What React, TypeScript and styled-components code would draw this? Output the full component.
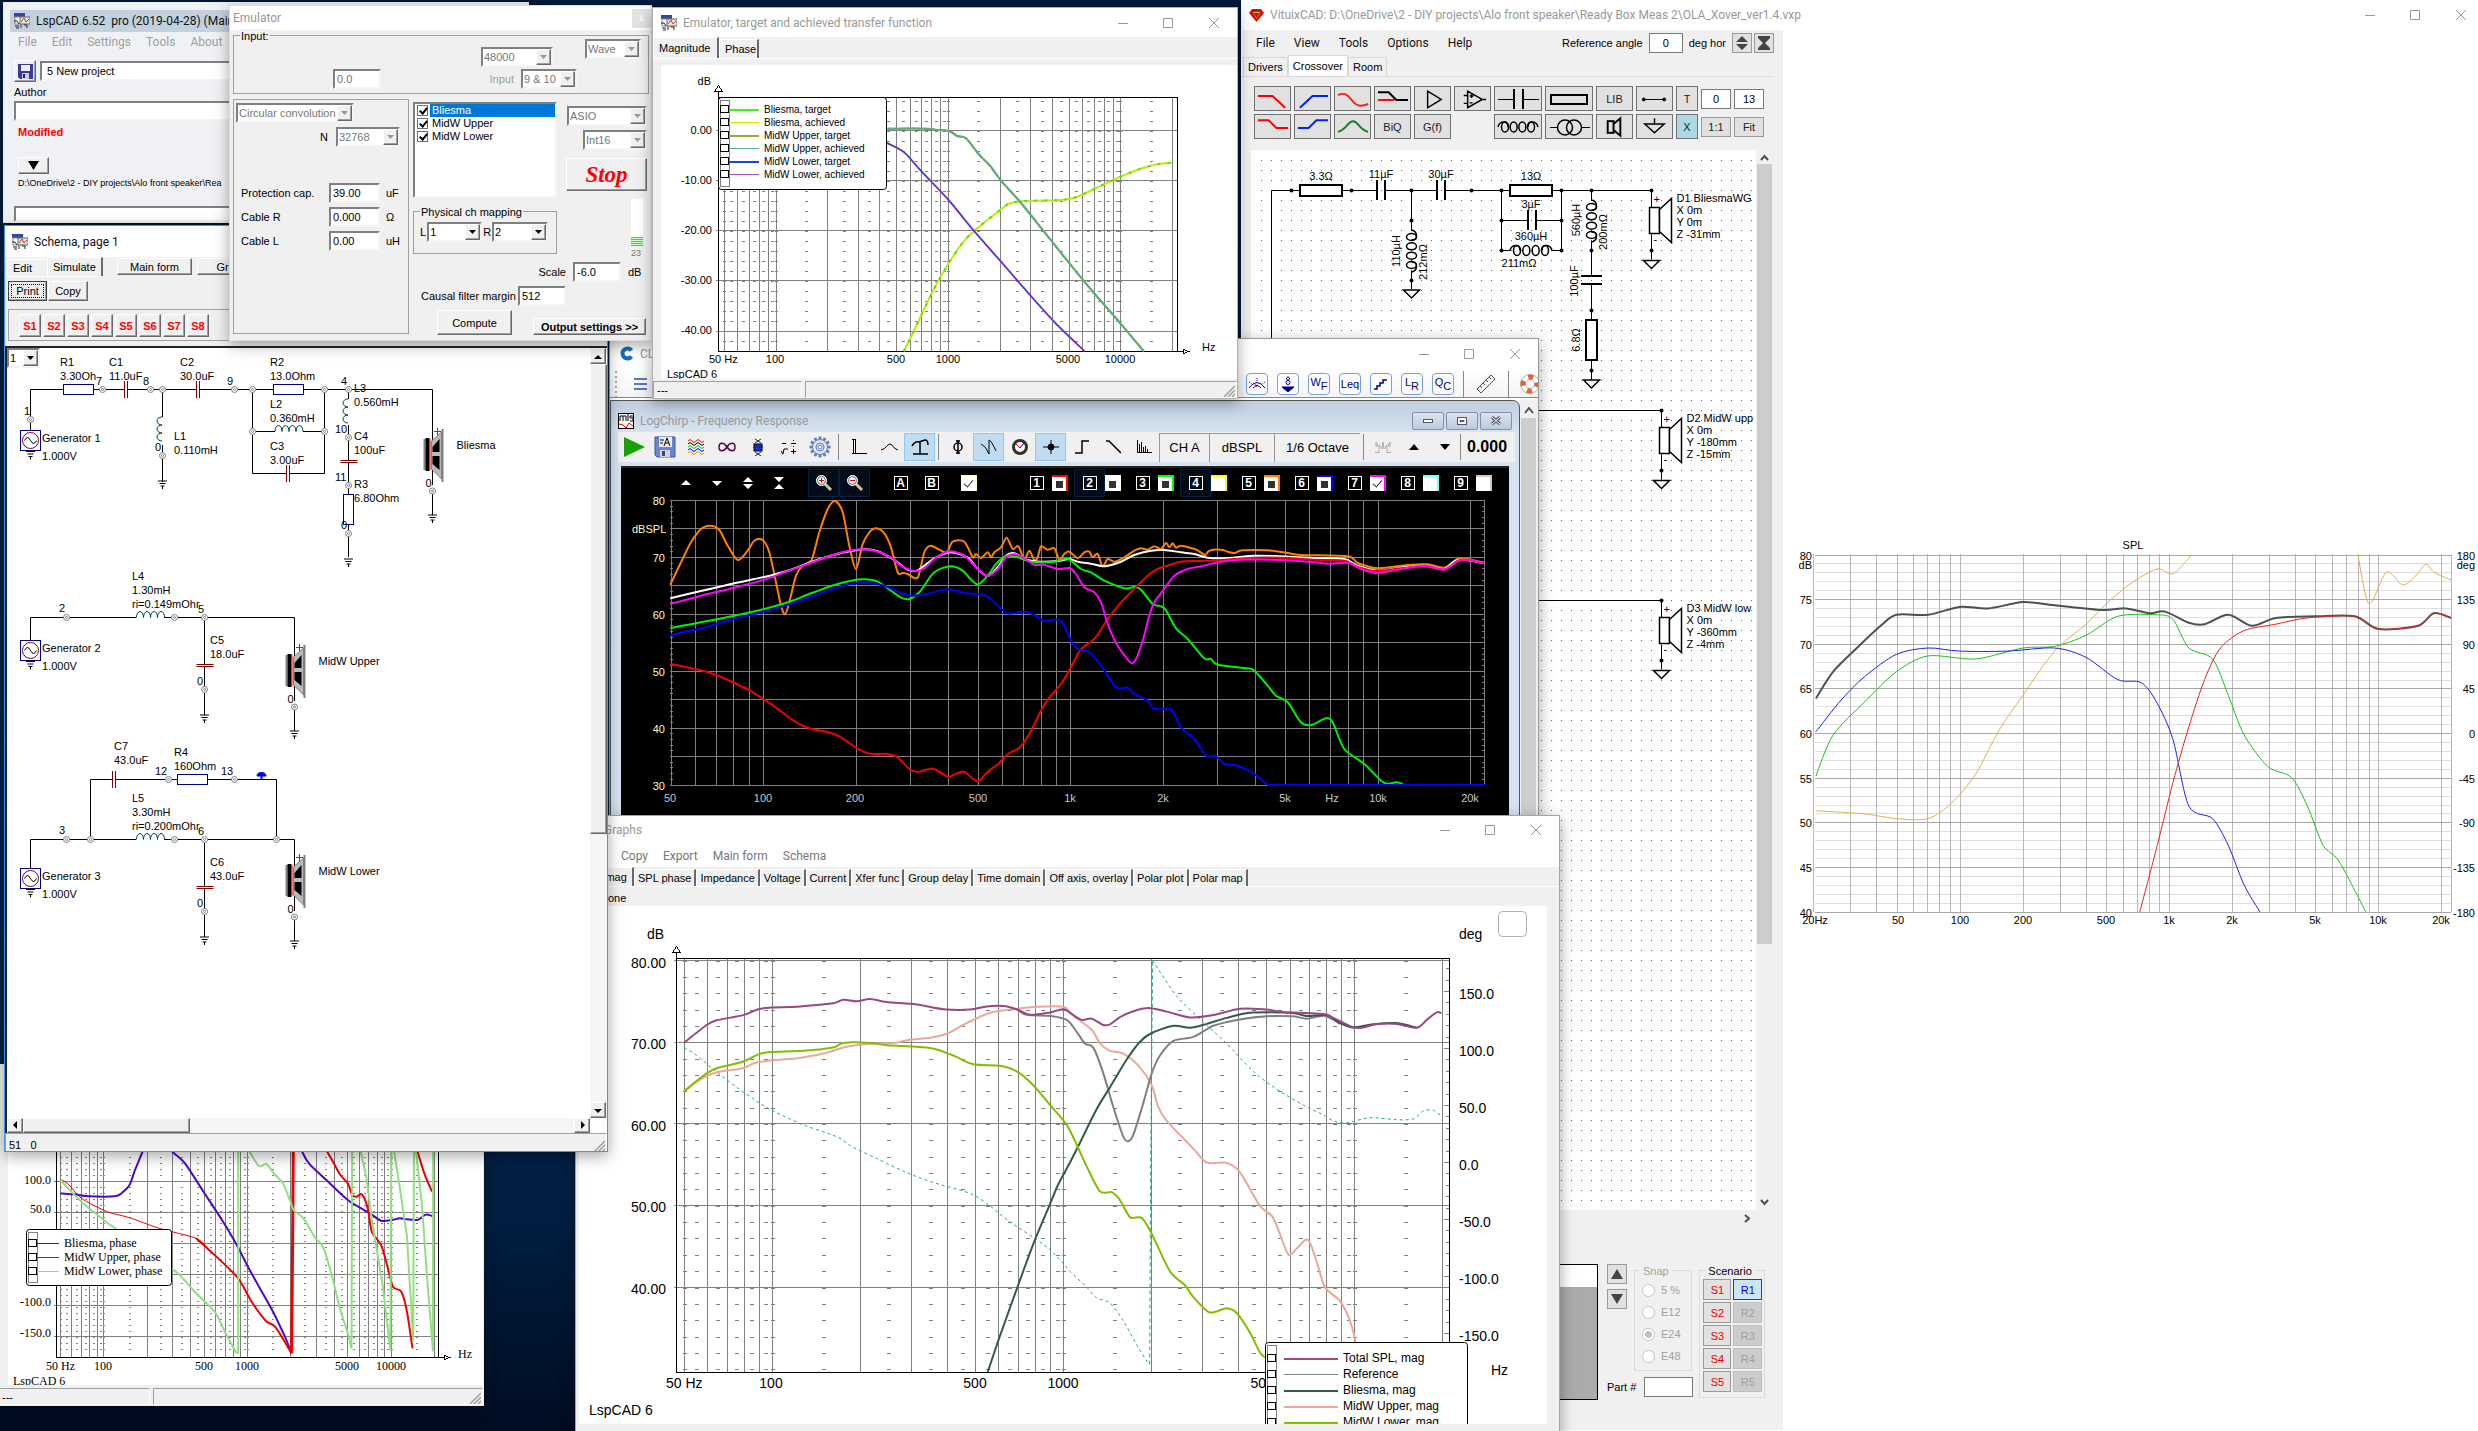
import React from "react";
import styled, { createGlobalStyle, css } from "styled-components";

/* ---------- base ---------- */

const SANS = `"Liberation Sans", Arial, sans-serif`;
const UI = `Roboto, "Open Sans", sans-serif`;
const SERIF = `"Liberation Serif", "Times New Roman", serif`;

const Global = createGlobalStyle`
  * { box-sizing: border-box; }
  html, body, #root { margin: 0; height: 100%; }
  body { font: 11px/14px ${SANS}; color: #000; background: #001430; overflow: hidden; }
  button, input, select { font: inherit; color: inherit; margin: 0; padding: 0; border-radius: 0; }
  svg { display: block; }
`;

const Desktop = styled.main`
  position: relative;
  height: 100vh;
  overflow: hidden;
  background: linear-gradient(180deg, #001a3a 0%, #00264e 60%, #001f42 85%, #000c22 100%);
`;

const Win = styled.section<{ $x: number; $y: number; $w?: number; $h?: number; $bg?: string; $edge?: string }>`
  position: absolute;
  left: ${(p) => p.$x}px;
  top: ${(p) => p.$y}px;
  ${(p) => (p.$w ? `width: ${p.$w}px;` : "right: 0;")}
  ${(p) => (p.$h ? `height: ${p.$h}px;` : "bottom: 0;")}
  background: ${(p) => p.$bg || "#f0f0f0"};
  border: 1px solid ${(p) => p.$edge || "#a5a5a5"};
  box-shadow: 0 4px 14px rgba(0, 0, 0, 0.35);
  display: flex;
  flex-direction: column;
  overflow: hidden;
`;

const Row = styled.div<{ $gap?: number; $pad?: string; $h?: number; $align?: string; $justify?: string }>`
  display: flex;
  flex: none;
  align-items: ${(p) => p.$align || "center"};
  justify-content: ${(p) => p.$justify || "flex-start"};
  gap: ${(p) => p.$gap || 0}px;
  padding: ${(p) => p.$pad || 0};
  ${(p) => p.$h && `height: ${p.$h}px;`}
`;

const Col = styled.div<{ $gap?: number; $pad?: string; $w?: number; $align?: string }>`
  display: flex;
  flex: none;
  flex-direction: column;
  align-items: ${(p) => p.$align || "stretch"};
  gap: ${(p) => p.$gap || 0}px;
  padding: ${(p) => p.$pad || 0};
  ${(p) => p.$w && `width: ${p.$w}px;`}
`;

const TitleBar = styled.header<{ $h: number; $bg?: string; $dark?: boolean; $pad?: string }>`
  display: flex;
  flex: none;
  align-items: center;
  gap: 6px;
  height: ${(p) => p.$h}px;
  padding: ${(p) => p.$pad || "0 7px"};
  background: ${(p) => p.$bg || "#fff"};
  color: ${(p) => (p.$dark ? "#111" : "#999")};
  font: 12px/16px ${UI};
  white-space: pre;
`;

const Spacer = styled.span`
  flex: 1;
`;

const raised = css`
  border: 1px solid;
  border-color: #fff #696969 #696969 #fff;
  box-shadow: inset -1px -1px 0 #a0a0a0;
`;
const sunken = css`
  border: 2px solid;
  border-color: #808080 #f4f4f4 #f4f4f4 #808080;
`;

const Btn = styled.button<{ $w?: number; $h?: number; $color?: string; $bold?: boolean; $focus?: boolean }>`
  ${raised}
  flex: none;
  background: #f0f0f0;
  ${(p) => p.$w && `width: ${p.$w}px;`}
  height: ${(p) => p.$h || 20}px;
  color: ${(p) => p.$color || "#000"};
  font-weight: ${(p) => (p.$bold ? 700 : 400)};
  white-space: nowrap;
  display: flex;
  align-items: center;
  justify-content: center;
  ${(p) => p.$focus && `border-color: #444; outline: 1px dotted #000; outline-offset: -4px;`}
`;

const StopBtn = styled(Btn)`
  font: italic 700 23px/26px ${SERIF};
`;

const Field = styled.input<{ $w?: number; $dim?: boolean }>`
  ${sunken}
  ${(p) => (p.$w ? `flex: none; width: ${p.$w}px;` : "flex: 1; min-width: 0;")}
  height: 20px;
  padding: 0 2px;
  background: #fff;
  color: ${(p) => (p.$dim ? "#777" : "#000")};
`;

const DropWrap = styled.span<{ $w: number; $dim?: boolean }>`
  ${sunken}
  display: flex;
  flex: none;
  width: ${(p) => p.$w}px;
  height: 20px;
  background: #fff;
  color: ${(p) => (p.$dim ? "#777" : "#000")};
  select {
    flex: 1;
    min-width: 0;
    appearance: none;
    border: 0;
    padding: 0 0 0 1px;
    background: none;
    opacity: 1;
  }
  span {
    ${raised}
    flex: none;
    width: 15px;
    background: #f0f0f0;
    display: flex;
    align-items: center;
    justify-content: center;
  }
`;

function Drop({ w, value, dim, label }: { w: number; value: string; dim?: boolean; label: string }) {
  return (
    <DropWrap $w={w} $dim={dim}>
      <select aria-label={label} disabled={dim} defaultValue={value}>
        <option>{value}</option>
      </select>
      <span>
        <svg width="7" height="4">
          <path d="M0 0H7L3.5 4Z" fill={dim ? "#999" : "#000"} />
        </svg>
      </span>
    </DropWrap>
  );
}

const Group = styled.fieldset<{ $w?: number; $h?: number; $pad?: string; $line?: string; $left?: number }>`
  position: relative;
  flex: none;
  min-width: 0;
  margin: 0;
  ${(p) => p.$w && `width: ${p.$w}px;`}
  ${(p) => p.$h && `height: ${p.$h}px;`}
  padding: ${(p) => p.$pad || 0};
  border: 1px solid ${(p) => p.$line || "#a0a0a0"};
  legend {
    position: absolute;
    top: -7px;
    left: ${(p) => p.$left || 6}px;
    padding: 0 1px;
    background: #f0f0f0;
  }
`;

const WinButtons = () => (
  <svg width="102" height="12" fill="none" stroke="#999">
    <path d="M0 6.5H10" />
    <path d="M45.5 1.5h9v9h-9z" />
    <path d="M91 1l10 10m0 -10l-10 10" />
  </svg>
);

const LspIcon = () => (
  <svg width="16" height="16">
    <rect x="0" y="0" width="11" height="4" fill="#334a9c" />
    <rect x="1" y="4" width="9" height="7" fill="#fff" stroke="#888" />
    <rect x="6" y="4" width="10" height="7" fill="#dfe8dc" stroke="#666" />
    <path d="M7 9l3-4 2 4 3-3" stroke="#d33" fill="none" />
    <path d="M0 8h3l2 3M1 13h4M7 12v3M10 12h3v3M2 15h3" stroke="#222" fill="none" />
  </svg>
);

/* ---------- chart helpers ---------- */

type Pts = number[];

function tracePath(pts: Pts, ox: number, oy: number, sx: number, sy: number, smooth = true) {
  const p: [number, number][] = [];
  for (let i = 0; i < pts.length; i += 2) p.push([ox + pts[i] / sx, oy + pts[i + 1] / sy]);
  const n = (v: number) => v.toFixed(1);
  let d = `M${n(p[0][0])} ${n(p[0][1])}`;
  for (let i = 1; i < p.length; i++) {
    const a = p[i - 1];
    const b = p[i];
    if (!smooth) {
      d += `L${n(b[0])} ${n(b[1])}`;
      continue;
    }
    const z = p[i - 2] || a;
    const c = p[i + 1] || b;
    d += `C${n(a[0] + (b[0] - z[0]) / 7)} ${n(a[1] + (b[1] - z[1]) / 7)} ${n(b[0] - (c[0] - a[0]) / 7)} ${n(b[1] - (c[1] - a[1]) / 7)} ${n(b[0])} ${n(b[1])}`;
  }
  return d;
}

interface Frame {
  ox: number;
  oy: number;
  sx: number;
  sy: number;
}

const Trace = ({ f, pts, c, w = 2, dash, sharp }: { f: Frame; pts: Pts; c: string; w?: number; dash?: string; sharp?: boolean }) => (
  <path
    d={tracePath(pts, f.ox, f.oy, f.sx, f.sy, !sharp)}
    fill="none"
    stroke={c}
    strokeWidth={w}
    strokeDasharray={dash}
    strokeLinejoin="round"
  />
);

const MAJOR = [50, 60, 70, 80, 90, 100, 200, 300, 400, 500, 600, 700, 800, 900, 1000, 2000, 3000, 4000, 5000, 6000, 7000, 8000, 9000, 10000, 20000];
const MINOR = [55, 65, 75, 85, 95, 150, 250, 350, 450, 550, 650, 750, 850, 950, 1500, 2500, 3500, 4500, 5500, 6500, 7500, 8500, 9500, 15000];

interface LspGridProps {
  x: number;
  r: number;
  t: number;
  b: number;
  x1k: number;
  dec: number;
  ys: number[];
  step: number;
  dashW: number;
}

const LspGrid = ({ x, r, t, b, x1k, dec, ys, step, dashW }: LspGridProps) => {
  const X = (f: number) => Math.round(x1k + dec * Math.log10(f / 1000)) + 0.5;
  return (
    <g shapeRendering="crispEdges" fill="none" stroke="#808080">
      <path d={MAJOR.map((f) => `M${X(f)} ${t}V${b}`).join("")} />
      <path d={ys.map((y) => `M${x - 3} ${y}H${r}`).join("")} />
      {[...MINOR, 50, 100, 1000, 10000].map((f) => (
        <path key={f} d={`M${X(f)} ${ys[0] - Math.floor((ys[0] - t) / step) * step}V${b - 3}`} strokeWidth={dashW} strokeDasharray={`1 ${step - 1}`} />
      ))}
      <path d={`M${x} ${t - 8}V${b}H${r + 8}M${x} ${t}H${r}V${b}`} stroke="#000" />
      <path d={`M${x - 4} ${t - 6}L${x} ${t - 12}L${x + 4} ${t - 6}ZM${r + 6} ${b - 2}L${r + 11} ${b}L${r + 6} ${b + 2}Z`} stroke="#000" fill="#fff" />
    </g>
  );
};

const Legend = ({ x, y, w, h, items, top, pitch, textX, lineX, font, size }: any) => (
  <g>
    <rect x={x + 0.5} y={y + 0.5} width={w} height={h} rx="3" fill="#fff" stroke="#000" />
    <rect x={x + 2.5} y={y + 3.5} width="9" height={h - 6} fill="none" stroke="#000" strokeDasharray="1 1" />
    {items.map(([name, c, lw]: [string, string, number], i: number) => (
      <g key={name}>
        <path d={`M${lineX} ${top + i * pitch + 0.5}H${textX - 5}`} stroke={c} strokeWidth={lw} shapeRendering="crispEdges" />
        <rect x={x + 2.5} y={top + i * pitch - 3.5} width="8" height="7" fill="#fff" stroke="#000" />
        <text x={textX} y={top + i * pitch + 4} fontFamily={font} fontSize={size}>
          {name}
        </text>
      </g>
    ))}
  </g>
);

const T = ({ x, y, c, a, s = 11, f = SANS, children, rot }: any) => (
  <text x={x} y={y} fill={c} textAnchor={a} fontSize={s} fontFamily={f} transform={rot ? `rotate(-90 ${x} ${y})` : undefined}>
    {children}
  </text>
);

/* ---------- LspCAD main window ---------- */

const MenuBar = styled.nav<{ $gap: number; $pad: string; $h: number; $color?: string; $bg?: string }>`
  display: flex;
  flex: none;
  align-items: center;
  gap: ${(p) => p.$gap}px;
  padding: ${(p) => p.$pad};
  height: ${(p) => p.$h}px;
  color: ${(p) => p.$color || "#111"};
  background: ${(p) => p.$bg || "none"};
  font: 12px/16px ${UI};
  button {
    border: 0;
    background: none;
  }
`;

const MainBody = styled.div`
  margin: 7px 6px 0;
  flex: none;
  display: flex;
  flex-direction: column;
`;
const AuthorLabel = styled.label`
  padding: 3px 0 2px;
`;
const Modified = styled.strong`
  color: #f00;
  padding: 4px 4px 18px;
`;
const PathText = styled.p`
  margin: 0;
  padding: 2px 4px 16px;
  font-size: 9px;
  white-space: nowrap;
`;

const Floppy = () => (
  <svg width="15" height="15">
    <path d="M0 0H15V15H2L0 13Z" fill="#3a3a9c" />
    <rect x="3" y="1" width="9" height="6" fill="#eef" />
    <rect x="4" y="9" width="7" height="6" fill="#ccd" />
    <rect x="5" y="10" width="2" height="4" fill="#226" />
  </svg>
);

const LspMain = () => (
  <Win $x={3} $y={2} $w={526} $h={221} $bg="#eff1f4" $edge="#e8edf2">
    <MainBody>
      <TitleBar $h={22} $bg="#c3d1de" $dark $pad="0 4px">
        <LspIcon />
        {"LspCAD 6.52  pro (2019-04-28) (Main"}
      </TitleBar>
      <MenuBar $gap={15} $pad="0 8px" $h={20} $color="#a0a0a0">
        {["File", "Edit", "Settings", "Tools", "About"].map((m) => (
          <button key={m}>{m}</button>
        ))}
      </MenuBar>
      <Col $pad="8px 4px 0">
        <Row $gap={4}>
          <Btn $w={22} $h={22} aria-label="Save">
            <Floppy />
          </Btn>
          <Field aria-label="Project" defaultValue=" 5 New project" />
        </Row>
        <AuthorLabel htmlFor="author">Author</AuthorLabel>
        <Row>
          <Field id="author" defaultValue="" />
        </Row>
        <Modified>Modified</Modified>
        <Row $pad="0 4px">
          <Btn $w={31} $h={17} aria-label="Expand">
            <svg width="11" height="9">
              <path d="M0 0H11L5.5 9Z" />
            </svg>
          </Btn>
        </Row>
        <PathText>D:\OneDrive\2 - DIY projects\Alo front speaker\Rea</PathText>
        <Field aria-label="Notes" defaultValue="" />
      </Col>
    </MainBody>
  </Win>
);

/* ---------- Schema window ---------- */

const TabStrip = styled.div<{ $pad?: string }>`
  display: flex;
  flex: none;
  align-items: flex-end;
  padding: ${(p) => p.$pad || 0};
  border-bottom: 1px solid #fff;
`;
const Tab = styled.button<{ $active?: boolean; $w?: number; $h?: number; $dark?: boolean }>`
  border: 0;
  border-top: 1px solid #fff;
  border-left: 1px solid #fff;
  border-right: ${(p) => (p.$dark === false ? "1px solid #f0f0f0" : "2px solid #696969")};
  background: #f0f0f0;
  padding: 0 3px;
  height: ${(p) => (p.$h || 17) + (p.$active ? 2 : 0)}px;
  ${(p) => p.$w && `width: ${p.$w}px; padding: 0 5px;`}
  white-space: nowrap;
  text-align: left;
`;

const Canvas = styled.div`
  flex: none;
  display: grid;
  grid-template-columns: 1fr 17px;
  grid-template-rows: 1fr 15px;
  height: 787px;
  border-left: 2px solid #222;
  border-top: 2px solid #222;
  background: #fff;
`;
const Page = styled.div`
  position: relative;
  overflow: hidden;
  background: #fff;
`;
const PageSelect = styled.div`
  position: absolute;
  left: 0;
  top: 0;
`;
const Track = styled.div<{ $v?: boolean }>`
  background: #f6f6f6;
  display: flex;
  flex-direction: ${(p) => (p.$v ? "column" : "row")};
`;
const Thumb = styled.div<{ $len: number; $v?: boolean }>`
  ${raised}
  background: #f0f0f0;
  ${(p) => (p.$v ? `height: ${p.$len}px;` : `width: ${p.$len}px; height: 15px;`)}
`;
const StatusBar = styled.footer<{ $h?: number }>`
  display: flex;
  flex: none;
  gap: 3px;
  height: ${(p) => p.$h || 17}px;
  background: #f0f0f0;
`;
const Cell = styled.div<{ $w?: number }>`
  ${(p) => (p.$w ? `flex: none; width: ${p.$w}px;` : "flex: 1;")}
  display: flex;
  justify-content: space-between;
  align-items: flex-end;
  border: 1px solid;
  border-color: #a0a0a0 #fff #fff #a0a0a0;
  padding: 0 1px 0 3px;
  white-space: pre;
`;
const Grip = () => (
  <svg width="12" height="12" stroke="#a0a0a0" strokeWidth="1.5">
    <path d="M1 12L12 1M5 12L12 5M9 12L12 9" />
  </svg>
);

const Node = ({ x, y }: { x: number; y: number }) => (
  <g stroke="#808080" fill="#fff">
    <circle cx={x} cy={y} r="3" />
    <circle cx={x} cy={y} r="1" />
  </g>
);
const Gnd = ({ x, y }: { x: number; y: number }) => (
  <path d={`M${x - 4.5} ${y - 2}h9M${x - 3} ${y + 0.5}h6M${x - 2} ${y + 3}h4M${x} ${y + 3}v3`} stroke="#000" fill="none" />
);
const Gen = ({ y, n }: { y: number; n: number }) => (
  <g>
    <rect x="20.5" y={y} width="20" height="20" fill="#fff" stroke="#000080" />
    <circle cx="30.5" cy={y + 10} r="8" fill="none" stroke="#800000" />
    <path d={`M24.5 ${y + 10}q3 -6 6 0t6 0`} fill="none" stroke="#000" />
    <Gnd x={30.5} y={y + 23} />
    <T x={42} y={y + 11}>{`Generator ${n}`}</T>
    <T x={42} y={y + 29}>1.000V</T>
  </g>
);
const Spk = ({ x, y, name }: { x: number; y: number; name: string }) => (
  <g>
    <path d={`M${x} ${y + 10}V${y + 54}`} stroke="#000" />
    <rect x={x - 9} y={y + 8} width="2" height="31" fill="#808080" />
    <rect x={x - 7} y={y + 7} width="4" height="33" fill="#000" />
    <rect x={x - 3} y={y + 8} width="1" height="31" fill="#f00" />
    <path d={`M${x - 1} ${y + 10}L${x + 9} ${y + 1}V${y + 48}L${x - 1} ${y + 38}Z`} fill="#b8b8b8" stroke="#808080" />
    <path d={`M${x} ${y + 16}L${x + 7} ${y + 8}V${y + 21}H${x}ZM${x} ${y + 25}H${x + 7}V${y + 39}L${x} ${y + 33}Z`} fill="#000" />
    <rect x={x + 9} y={y - 2} width="2" height="53" fill="#808080" />
    <path d={`M${x + 5} ${y - 3}v7M${x + 1.5} ${y + 0.5}h7`} stroke="#f00" />
    <path d={`M${x} ${y + 60}V${y + 84}`} stroke="#000" />
    <Node x={x} y={y + 60} />
    <Gnd x={x} y={y + 86} />
    <T x={x - 7} y={y + 56}>0</T>
    <T x={x + 24} y={y + 18}>{name}</T>
  </g>
);
const CapV = ({ x, y }: { x: number; y: number }) => (
  <g>
    <rect x={x - 1} y={y - 8} width="2" height="17" fill="#fff" />
    <path d={`M${x - 1.5} ${y - 8}v17M${x + 1.5} ${y - 8}v17`} stroke="#800000" />
  </g>
);
const CapH = ({ x, y }: { x: number; y: number }) => (
  <g>
    <rect x={x - 8} y={y - 1} width="17" height="2" fill="#fff" />
    <path d={`M${x - 8} ${y - 1}h17M${x - 8} ${y + 1}h17`} stroke="#800000" />
  </g>
);
const Res = ({ x, y, w, h }: { x: number; y: number; w: number; h: number }) => (
  <rect x={x} y={y} width={w} height={h} fill="#fff" stroke="#000080" />
);
const bumpsH = (x: number, y: number) => `M${x} ${y}` + "a3.5 6 0 0 1 7 0".repeat(4);
const bumpsV = (x: number, y: number) => `M${x} ${y}` + "a5 4 0 0 0 0 8".repeat(3);

const SCHEMA_LABELS: [string, number, number][] = [
  ["R1", 60, 367], ["3.30Oh", 60, 381], ["C1", 109, 367], ["11.0uF", 109, 381], ["C2", 180, 367], ["30.0uF", 180, 381],
  ["R2", 270, 367], ["13.0Ohm", 270, 381], ["7", 96, 386], ["8", 143, 386], ["9", 227, 386], ["4", 341, 386], ["1", 24, 416],
  ["L2", 270, 409], ["0.360mH", 270, 423], ["C3", 270, 451], ["3.00uF", 270, 465], ["L3", 354, 393], ["0.560mH", 354, 407],
  ["10", 335, 434], ["C4", 354, 441], ["100uF", 354, 455], ["11", 335, 482], ["R3", 354, 489], ["6.80Ohm", 354, 503], ["0", 341, 530],
  ["L1", 174, 441], ["0.110mH", 174, 455], ["0", 155, 452],
  ["L4", 132, 581], ["1.30mH", 132, 595], ["ri=0.149mOhr", 132, 609], ["2", 59, 613], ["5", 198, 614], ["C5", 210, 645], ["18.0uF", 210, 659], ["0", 197, 686],
  ["C7", 114, 751], ["43.0uF", 114, 765], ["12", 155, 776], ["R4", 174, 757], ["160Ohm", 174, 771], ["13", 221, 776],
  ["L5", 132, 803], ["3.30mH", 132, 817], ["ri=0.200mOhr", 132, 831], ["3", 59, 835], ["6", 198, 836], ["C6", 210, 867], ["43.0uF", 210, 881], ["0", 197, 908],
];
const SCHEMA_NODES: [number, number][] = [
  [102.5, 390.5], [150.5, 390.5], [162.5, 390.5], [234.5, 390.5], [252.5, 390.5], [324.5, 390.5], [348.5, 390.5], [30.5, 420.5],
  [162.5, 456.5], [252.5, 432.5], [324.5, 432.5], [348.5, 438.5], [348.5, 486.5], [348.5, 534.5],
  [66.5, 618.5], [174.5, 618.5], [204.5, 618.5], [204.5, 690.5],
  [66.5, 840.5], [90.5, 840.5], [174.5, 840.5], [204.5, 840.5], [276.5, 840.5], [168.5, 780.5], [234.5, 780.5], [204.5, 912.5],
];

const SchemaDrawing = () => (
  <svg width="583" height="770" viewBox="7 349 583 770">
    <g fill="none" stroke="#000">
      <path d="M30.5 431V390.5H432.5V443M162.5 390.5V418M162.5 446V483M252.5 390.5V474.5H324.5V390.5M252.5 432.5H275M303 432.5H324.5M348.5 390.5V400M348.5 426V495M348.5 526V558" />
      <path d="M30.5 641V618.5H136M164 618.5H294.5V660M204.5 618.5V716" />
      <path d="M30.5 869V840.5H136M164 840.5H294.5V870M204.5 840.5V938M90.5 840.5V780.5H276.5V840.5" />
    </g>
    <g fill="none" stroke="#004040">
      <path d={bumpsH(275, 432.5)} />
      <path d={bumpsH(136.5, 618.5)} />
      <path d={bumpsH(136.5, 840.5)} />
      <path d={bumpsV(162, 418)} />
      <path d={bumpsV(348, 400)} />
    </g>
    <Res x={63.5} y={385.5} w={30} h={10} />
    <Res x={273.5} y={385.5} w={30} h={10} />
    <Res x={343.5} y={495.5} w={10} h={30} />
    <Res x={177.5} y={775.5} w={30} h={10} />
    <CapV x={126} y={390} />
    <CapV x={198} y={390} />
    <CapV x={288} y={474} />
    <CapV x={114} y={780} />
    <CapH x={348.5} y={462.5} />
    <CapH x={204.5} y={666.5} />
    <CapH x={204.5} y={888.5} />
    {SCHEMA_NODES.map(([x, y]) => (
      <Node key={`${x}-${y}`} x={x} y={y} />
    ))}
    <Gnd x={162.5} y={484} />
    <Gnd x={348.5} y={562} />
    <Gnd x={204.5} y={718} />
    <Gnd x={204.5} y={940} />
    <Gen y={431.5} n={1} />
    <Gen y={641.5} n={2} />
    <Gen y={869.5} n={3} />
    <Spk x={432.5} y={432} name="Bliesma" />
    <Spk x={294.5} y={648} name="MidW Upper" />
    <Spk x={294.5} y={858} name="MidW Lower" />
    <path d="M257 777a4.5 3.5 0 0 1 9 0zM261 777h1v3h-1z" fill="#00f" stroke="#00f" />
    {SCHEMA_LABELS.map(([s, x, y]) => (
      <T key={`${s}${x}-${y}`} x={x} y={y}>
        {s}
      </T>
    ))}
  </svg>
);

const Arrow = ({ d }: { d: string }) => (
  <svg width="9" height="9">
    <path d={d} />
  </svg>
);

const SchemaWindow = () => (
  <Win $x={4} $y={225} $w={604} $h={927} $edge="#4a95e8">
    <TitleBar $h={31} $dark>
      <LspIcon />
      Schema, page 1
    </TitleBar>
    <Row $gap={4} $pad="0 2px" $align="flex-end" $h={20}>
      <TabStrip>
        <Tab $w={40} $dark={false}>Edit</Tab>
        <Tab $w={56} $active>Simulate</Tab>
      </TabStrip>
      <Row $gap={5} $pad="0 10px 2px">
        <Btn $w={75} $h={17}>Main form</Btn>
        <Btn $w={75} $h={17}>Graphs</Btn>
      </Row>
    </Row>
    <Row $pad="4px 3px 8px" $gap={1}>
      <Btn $w={39} $h={20} $focus>Print</Btn>
      <Btn $w={40} $h={20}>Copy</Btn>
    </Row>
    <Row $pad="0 3px 5px" $align="stretch">
      <Group $w={590} $h={32} $pad="4px 10px">
        <Row $gap={2}>
          {[1, 2, 3, 4, 5, 6, 7, 8].map((n) => (
            <Btn key={n} $w={22} $h={23} $color="#f00" $bold>{`S${n}`}</Btn>
          ))}
        </Row>
      </Group>
    </Row>
    <Canvas>
      <Page>
        <SchemaDrawing />
        <PageSelect>
          <Drop w={33} value="1" label="Page" />
        </PageSelect>
      </Page>
      <Track $v>
        <Btn $w={16} $h={16} aria-label="Up">
          <Arrow d="M0 7H8L4 3Z" />
        </Btn>
        <Thumb $v $len={470} />
        <Spacer />
        <Btn $w={16} $h={16} aria-label="Down">
          <Arrow d="M0 3H8L4 7Z" />
        </Btn>
      </Track>
      <Track>
        <Btn $w={16} $h={15} aria-label="Left">
          <Arrow d="M6 0V8L2 4Z" />
        </Btn>
        <Thumb $len={167} />
        <Spacer />
        <Btn $w={16} $h={15} aria-label="Right">
          <Arrow d="M3 0V8L7 4Z" />
        </Btn>
      </Track>
    </Canvas>
    <StatusBar $h={20}>
      <Cell>
        <span>51   0</span>
        <Grip />
      </Cell>
    </StatusBar>
  </Win>
);

/* ---------- Emulator dialog ---------- */

const ListBox = styled.div`
  ${sunken}
  width: 144px;
  height: 96px;
  background: #fff;
`;
const ListRow = styled.label<{ $on?: boolean }>`
  display: flex;
  align-items: center;
  gap: 2px;
  height: 13px;
  padding-left: 2px;
  line-height: 13px;
  input {
    appearance: none;
    flex: none;
    width: 11px;
    height: 11px;
    border: 1px solid #707070;
    background: #fff;
    position: relative;
  }
  input:checked::after {
    content: "";
    position: absolute;
    left: 3px;
    top: 0;
    width: 3px;
    height: 6px;
    border: solid #000;
    border-width: 0 2px 2px 0;
    transform: rotate(40deg);
  }
  span {
    flex: 1;
    padding-left: 2px;
    ${(p) => p.$on && "background: #0078d7; color: #fff;"}
  }
`;
const Label = styled.label<{ $w?: number; $dim?: boolean }>`
  ${(p) => p.$w && `width: ${p.$w}px;`}
  color: ${(p) => (p.$dim ? "#a0a0a0" : "inherit")};
  white-space: nowrap;
`;
const CloseBox = styled.button`
  width: 19px;
  height: 19px;
  border: 0;
  background: #e2e2e2;
  color: #fff;
  font: 11px/14px ${UI};
`;
const Meter = styled.div`
  width: 12px;
  height: 47px;
  padding-top: 38px;
  background: #fff;
  &::after {
    content: "";
    display: block;
    height: 9px;
    background: repeating-linear-gradient(#0f0 0 1px, #cfc 1px 2px);
  }
`;
const MeterText = styled.span`
  color: #777;
  font-size: 9px;
`;

const EmulatorDialog = () => (
  <Win $x={229} $y={5} $w={423} $h={336} $edge="#dcdcdc">
    <TitleBar $h={24} $pad="0 0 0 3px">
      Emulator
      <Spacer />
      <CloseBox aria-label="Close">x</CloseBox>
    </TitleBar>
    <Col $pad="5px 3px" $gap={5}>
      <Group $w={416} $h={59} $pad="2px 7px 5px 99px">
        <legend>Input:</legend>
        <Row $align="flex-end" $h={51} $justify="space-between">
          <Field $w={48} $dim aria-label="Level" defaultValue="0.0" />
          <Row $gap={8} $align="flex-start">
            <Col $gap={2} $pad="8px 0 0" $w={96}>
              <Drop w={72} dim value="48000" label="Sample rate" />
              <Row $gap={7} $justify="flex-end">
                <Label $dim>Input</Label>
                <Drop w={56} dim value="9 & 10" label="Input channels" />
              </Row>
            </Col>
            <Drop w={56} dim value="Wave" label="Input type" />
          </Row>
        </Row>
      </Group>
      <Row $gap={4} $align="flex-start">
        <Group $w={176} $h={235} $pad="3px 2px">
          <Col $gap={4}>
            <Drop w={118} dim value="Circular convolution" label="Convolution" />
            <Row $gap={8} $justify="flex-end" $pad="0 6px 32px 0">
              <span>N</span>
              <Drop w={64} dim value="32768" label="N" />
            </Row>
            {[
              ["Protection cap.", "39.00", "uF"],
              ["Cable R", "0.000", "Ω"],
              ["Cable L", "0.00", "uH"],
            ].map(([l, v, u]) => (
              <Row key={l} $gap={6} $pad="0 0 0 5px">
                <Label $w={82} htmlFor={l}>{l}</Label>
                <Field $w={51} id={l} defaultValue={v} />
                <span>{u}</span>
              </Row>
            ))}
          </Col>
        </Group>
        <Col $w={234} $pad="3px 0 0">
          <Row $gap={8} $align="flex-start">
            <Col $gap={13}>
              <ListBox>
                {["Bliesma", "MidW Upper", "MidW Lower"].map((n, i) => (
                  <ListRow key={n} $on={i === 0}>
                    <input type="checkbox" defaultChecked />
                    <span>{n}</span>
                  </ListRow>
                ))}
              </ListBox>
              <Group $w={144} $h={43} $pad="10px 6px">
                <legend>Physical ch mapping</legend>
                <Row $gap={1}>
                  <span>L</span>
                  <Drop w={55} value="1" label="Left channel" />
                  <span>R</span>
                  <Drop w={56} value="2" label="Right channel" />
                </Row>
              </Group>
            </Col>
            <Col $w={82} $gap={4} $align="flex-end" $pad="4px 0 0">
              <Drop w={80} dim value="ASIO" label="Driver" />
              <Drop w={64} dim value="Int16" label="Format" />
              <Row $pad="4px 0">
                <StopBtn $w={81} $h={33} $color="#f00">Stop</StopBtn>
              </Row>
              <Col $pad="0 4px 0 0">
                <Meter />
                <MeterText>23</MeterText>
              </Col>
            </Col>
          </Row>
          <Row $gap={7} $justify="flex-end" $pad="2px 7px 4px 0">
            <Label htmlFor="scale">Scale</Label>
            <Field $w={48} id="scale" defaultValue="-6.0" />
            <Label $w={12} htmlFor="scale">dB</Label>
          </Row>
          <Row $pad="0 8px 4px">
            <Label htmlFor="margin" $w={97}>Causal filter margin</Label>
            <Field $w={48} id="margin" defaultValue="512" />
          </Row>
          <Row $align="flex-end" $justify="space-between" $pad="0 1px 0 24px">
            <Btn $w={75} $h={25}>Compute</Btn>
            <Btn $w={113} $h={17} $bold>{"Output settings >>"}</Btn>
          </Row>
        </Col>
      </Row>
    </Col>
  </Win>
);

/* ---------- transfer function window ---------- */

const TF: Frame = { ox: 640, oy: 0, sx: 2.57, sy: 3 };
const TF_UPPER = [636, 386, 736, 386, 760, 389, 795, 393, 815, 408, 838, 415, 870, 462, 900, 498, 930, 545, 975, 603, 1035, 690, 1100, 785, 1160, 870, 1220, 950, 1295, 1054];
const TF_LOWER = [630, 428, 640, 432, 680, 458, 720, 510, 793, 600, 860, 695, 930, 788, 1000, 882, 1070, 972, 1143, 1054];
const TF_BLIESMA = [678, 1054, 705, 990, 750, 880, 793, 790, 835, 720, 870, 682, 920, 635, 950, 610, 990, 603, 1080, 600, 1120, 592, 1180, 560, 1235, 530, 1290, 505, 1330, 493, 1368, 488];

const Paper = styled.div<{ $m: string }>`
  margin: ${(p) => p.$m};
  flex: 1;
  min-height: 0;
  background: #fff;
  overflow: hidden;
`;

const TransferWindow = () => (
  <Win $x={652} $y={7} $w={586} $h={392} $edge="#b0b0b0">
    <TitleBar $h={29} $pad="0 17px 0 8px">
      <LspIcon />
      Emulator, target and achieved transfer function
      <Spacer />
      <WinButtons />
    </TitleBar>
    <TabStrip>
      <Tab $active $w={66} $h={19}>Magnitude</Tab>
      <Tab $w={40} $h={19}>Phase</Tab>
    </TabStrip>
    <Paper $m="6px 0 0 8px">
      <svg width="576" height="314" viewBox="661 65 576 314">
        <LspGrid x={718.5} r={1177.5} t={97.5} b={351.5} x1k={948} dec={172.4} ys={[130.5, 180.5, 230.5, 280.5, 331.5]} step={10} dashW={3} />
        <Trace f={TF} pts={TF_BLIESMA} c="#c8e800" w={2} />
        <Trace f={TF} pts={TF_BLIESMA} c="#50e020" w={2} dash="3 7" />
        <Trace f={TF} pts={TF_UPPER} c="#8aa040" w={2} />
        <Trace f={TF} pts={TF_UPPER} c="#56ad88" w={2} dash="10 2" />
        <Trace f={TF} pts={TF_LOWER} c="#9a50c8" w={2} />
        <Trace f={TF} pts={TF_LOWER} c="#2030d0" w={1} />
        <Legend x={718} y={97} w={168} h={92} top={109} pitch={13} lineX={729} textX={764} font={SANS} size={10}
          items={[["Bliesma, target", "#40f020", 2], ["Bliesma, achieved", "#d0e800", 1], ["MidW Upper, target", "#a0a830", 2], ["MidW Upper, achieved", "#56ad90", 1], ["MidW Lower, target", "#2040d8", 2], ["MidW Lower, achieved", "#a050c0", 1]]} />
        <T x={711} y={85} a="end">dB</T>
        {["0.00", "-10.00", "-20.00", "-30.00", "-40.00"].map((s, i) => (
          <T key={s} x={712} y={134 + i * 50} a="end">{s}</T>
        ))}
        <T x={709} y={363}>50 Hz</T>
        <T x={775} y={363} a="middle">100</T>
        <T x={896} y={363} a="middle">500</T>
        <T x={948} y={363} a="middle">1000</T>
        <T x={1068} y={363} a="middle">5000</T>
        <T x={1120} y={363} a="middle">10000</T>
        <T x={1202} y={351}>Hz</T>
        <T x={667} y={378}>LspCAD 6</T>
      </svg>
    </Paper>
    <Row $h={2} />
    <StatusBar>
      <Cell $w={149}>---</Cell>
      <Cell>
        <span />
        <Grip />
      </Cell>
    </StatusBar>
  </Win>
);

/* ---------- SPL phase window ---------- */

const PF: Frame = { ox: 0, oy: 1120, sx: 2.703, sy: 3 };

const PhaseWindow = () => (
  <Win $x={-3} $y={1064} $w={487} $h={342} $edge="#f0f0f0">
    <Paper $m="0 0 0 10px">
      <svg width="475" height="321" viewBox="8 1065 475 321">
        <LspGrid x={56.5} r={438.5} t={1088.5} b={1357.5} x1k={247} dec={143.7} ys={[1150.5, 1181.5, 1212.5, 1243.5, 1274.5, 1305.5, 1336.5]} step={6} dashW={2} />
        <Trace f={PF} c="#4a08c8" pts={[163, 220, 200, 223, 240, 229, 310, 229, 330, 218, 350, 195, 365, 150, 385, 96, 400, 60]} />
        <Trace f={PF} c="#4a08c8" pts={[450, 70, 467, 96, 500, 130, 550, 215, 600, 300, 640, 375, 670, 440, 710, 520, 740, 580, 770, 650, 788, 700]} />
        <Trace f={PF} c="#4a08c8" pts={[805, 70, 817, 96, 835, 130, 880, 178, 940, 240, 1000, 280, 1030, 302, 1060, 300, 1080, 295, 1100, 298, 1130, 299, 1150, 284, 1168, 288]} />
        <Trace f={PF} c="#f00000" w={1} pts={[163, 178, 185, 193, 220, 235, 290, 275, 350, 293, 430, 325, 530, 355, 560, 385]} />
        <Trace f={PF} c="#f00000" pts={[530, 355, 560, 385, 640, 470, 680, 545, 718, 602, 745, 622, 788, 700]} />
        <Trace f={PF} c="#f00000" w={3} sharp pts={[788, 700, 791, 370, 793, 40]} />
        <Trace f={PF} c="#f00000" pts={[870, 60, 885, 96, 900, 125, 920, 165, 940, 190, 952, 225, 965, 230, 975, 222, 985, 235, 995, 270, 1005, 335, 1030, 375, 1045, 430, 1062, 500, 1085, 515, 1100, 575, 1115, 685]} />
        <Trace f={PF} c="#f00000" pts={[1120, 60, 1130, 100, 1150, 170, 1168, 215]} />
        <Trace f={PF} c="#90e080" pts={[163, 180, 220, 245, 280, 300, 315, 328, 463, 445, 490, 470, 530, 520, 580, 575, 610, 640, 638, 698]} />
        <Trace f={PF} c="#90e080" sharp pts={[638, 698, 644, 698, 644, 40]} />
        <Trace f={PF} c="#90e080" pts={[660, 70, 675, 96, 700, 138, 720, 132, 740, 160, 765, 190, 785, 245, 795, 272, 820, 295, 850, 350, 875, 385, 900, 480, 920, 570, 940, 640, 950, 685]} />
        <Trace f={PF} c="#90e080" sharp pts={[950, 685, 952, 40]} />
        <Trace f={PF} c="#90e080" sharp pts={[968, 60, 990, 170, 1005, 300, 1035, 500, 1055, 690, 1058, 40, 1080, 200, 1100, 350, 1117, 660, 1119, 40, 1140, 250, 1155, 480, 1170, 692, 1171, 40]} />
        <Legend x={26} y={1229} w={145} h={56} top={1243} pitch={14} lineX={37} textX={64} font={SERIF} size={12}
          items={[["Bliesma, phase", "#4a08c8", 1], ["MidW Upper, phase", "#f00", 1], ["MidW Lower, phase", "#90e080", 1]]} />
        {[["100.0", 1184], ["50.0", 1213], ["-100.0", 1306], ["-150.0", 1337]].map(([s, y]) => (
          <T key={s} x={51} y={y} a="end" f={SERIF} s={12}>{s}</T>
        ))}
        <T x={46} y={1370} f={SERIF} s={12}>50 Hz</T>
        {[["100", 103], ["500", 204], ["1000", 247], ["5000", 347], ["10000", 391]].map(([s, x]) => (
          <T key={s} x={x} y={1370} a="middle" f={SERIF} s={12}>{s}</T>
        ))}
        <T x={458} y={1358} f={SERIF} s={12}>Hz</T>
        <T x={13} y={1385} f={SERIF} s={12}>LspCAD 6</T>
      </svg>
    </Paper>
    <Row $h={3} />
    <StatusBar>
      <Cell $w={152}>---</Cell>
      <Cell>
        <span />
        <Grip />
      </Cell>
    </StatusBar>
  </Win>
);

/* ---------- CLIO ---------- */

const CL: Frame = { ox: 600, oy: 340, sx: 3, sy: 3 };

const CLRED = [208, 975, 240, 981, 300, 994, 345, 1008, 400, 1032, 445, 1054, 490, 1082, 530, 1110, 570, 1140, 605, 1160, 630, 1169, 690, 1182, 715, 1192, 745, 1212, 775, 1232, 805, 1244, 860, 1245, 890, 1255, 925, 1290, 950, 1299, 975, 1292, 1000, 1290, 1020, 1302, 1043, 1314, 1065, 1304, 1090, 1298, 1110, 1315, 1132, 1327, 1160, 1298, 1190, 1276, 1222, 1244, 1255, 1226, 1285, 1185, 1320, 1115, 1345, 1075, 1380, 1035, 1410, 985, 1439, 932, 1480, 900, 1520, 840, 1560, 790, 1600, 750, 1640, 710, 1670, 690, 1700, 680, 1740, 668, 1800, 666, 1850, 664, 1900, 660, 1980, 656, 2060, 657, 2140, 662, 2230, 665, 2260, 680, 2300, 692, 2330, 696, 2400, 688, 2470, 682, 2530, 691, 2570, 665, 2600, 663, 2650, 673];
const CLMAG = [208, 795, 300, 770, 400, 746, 490, 722, 550, 700, 620, 675, 680, 653, 730, 638, 785, 631, 830, 638, 870, 655, 900, 680, 940, 696, 970, 688, 1000, 660, 1030, 641, 1060, 638, 1095, 654, 1130, 690, 1160, 711, 1190, 690, 1215, 655, 1240, 646, 1265, 655, 1300, 677, 1330, 677, 1370, 690, 1405, 687, 1425, 705, 1450, 745, 1480, 760, 1500, 790, 1517, 845, 1530, 880, 1550, 920, 1575, 955, 1592, 973, 1605, 960, 1625, 905, 1645, 830, 1660, 790, 1690, 750, 1720, 710, 1760, 690, 1800, 682, 1860, 668, 1920, 662, 2000, 662, 2060, 664, 2140, 670, 2180, 674, 2245, 672, 2280, 690, 2330, 702, 2380, 694, 2470, 680, 2530, 692, 2570, 667, 2600, 662, 2650, 674];
const CLWHITE = [208, 778, 300, 756, 400, 733, 490, 714, 560, 695, 640, 666, 700, 647, 785, 631, 830, 637, 880, 663, 920, 692, 950, 694, 1000, 658, 1050, 640, 1100, 656, 1130, 690, 1160, 711, 1190, 685, 1215, 650, 1240, 643, 1280, 663, 1320, 668, 1370, 666, 1405, 660, 1430, 668, 1470, 674, 1510, 682, 1560, 668, 1600, 648, 1650, 635, 1690, 633, 1740, 640, 1780, 645, 1820, 656, 1880, 657, 1960, 650, 2040, 652, 2140, 657, 2230, 660, 2270, 680, 2330, 695, 2400, 686, 2470, 680, 2530, 690, 2570, 663, 2650, 672];
const CLGREEN = [208, 867, 300, 850, 400, 830, 490, 810, 560, 790, 630, 763, 700, 738, 750, 725, 790, 721, 830, 728, 870, 755, 900, 776, 925, 780, 955, 760, 1000, 700, 1050, 682, 1085, 695, 1110, 722, 1132, 736, 1160, 710, 1185, 675, 1215, 652, 1250, 655, 1290, 668, 1360, 668, 1400, 659, 1440, 690, 1470, 700, 1510, 725, 1570, 748, 1600, 744, 1620, 752, 1655, 795, 1690, 808, 1725, 868, 1760, 900, 1810, 958, 1830, 960, 1850, 977, 1940, 988, 1960, 995, 2000, 1040, 2025, 1070, 2060, 1090, 2100, 1150, 2130, 1158, 2175, 1138, 2195, 1150, 2230, 1230, 2290, 1275, 2340, 1325, 2360, 1334, 2385, 1330, 2405, 1334];
const CLBLUE = [208, 888, 300, 868, 400, 840, 490, 817, 560, 797, 640, 770, 700, 748, 750, 735, 800, 731, 850, 740, 900, 762, 940, 770, 980, 764, 1040, 751, 1090, 762, 1150, 768, 1180, 790, 1220, 823, 1270, 818, 1300, 828, 1330, 846, 1370, 842, 1390, 860, 1410, 905, 1430, 930, 1465, 940, 1500, 980, 1545, 1045, 1580, 1046, 1600, 1065, 1640, 1085, 1660, 1110, 1710, 1112, 1740, 1165, 1780, 1200, 1815, 1250, 1845, 1252, 1870, 1275, 1910, 1280, 1960, 1305, 1998, 1336];
const CLORANGE = [208, 737, 240, 670, 270, 610, 300, 570, 328, 560, 355, 573, 380, 620, 410, 663, 440, 635, 460, 605, 485, 603, 505, 640, 525, 730, 540, 800, 552, 826, 565, 790, 585, 710, 605, 680, 632, 662, 655, 580, 680, 510, 702, 486, 725, 520, 745, 620, 765, 690, 785, 615, 805, 580, 825, 568, 850, 583, 870, 625, 890, 700, 905, 702, 920, 705, 950, 716, 970, 640, 990, 620, 1035, 640, 1055, 608, 1090, 608, 1115, 655, 1125, 645, 1140, 657, 1160, 640, 1170, 655, 1180, 640, 1200, 625, 1217, 596, 1235, 630, 1252, 622, 1270, 660, 1285, 635, 1300, 663, 1310, 655, 1320, 622, 1340, 632, 1360, 628, 1375, 662, 1390, 645, 1405, 638, 1430, 657, 1450, 640, 1465, 638, 1475, 655, 1490, 645, 1505, 682, 1520, 660, 1540, 668, 1570, 655, 1600, 635, 1620, 628, 1640, 632, 1660, 622, 1680, 630, 1695, 612, 1705, 625, 1715, 613, 1725, 626, 1740, 620, 1770, 627, 1790, 634, 1812, 648, 1825, 635, 1860, 632, 1880, 638, 1900, 642, 1925, 634, 2000, 634, 2060, 642, 2100, 648, 2240, 652, 2270, 672, 2330, 688, 2420, 678, 2480, 676, 2530, 686, 2570, 660, 2600, 660, 2650, 672];

const cx = (f: number) => Math.round(1069.3 + 307.2 * Math.log10(f / 1000)) + 0.5;
const cy = (db: number) => Math.round(501 + (80 - db) * 5.69) + 0.5;

const ClioChart = () => (
  <svg width="887" height="320" viewBox="620 498 887 320" fontFamily={SANS}>
    <g shapeRendering="crispEdges" stroke="#808080" fill="none">
      <path d={MAJOR.map((f) => `M${cx(f)} 501V786`).join("") + "M1483.5 501V786"} />
      <path d={[80, 75, 70, 65, 60, 55, 50, 45, 40, 35, 30].map((d) => `M669 ${cy(d)}H1484`).join("")} />
      <path d={Array.from({ length: 50 }, (_, i) => `M669 ${cy(30 + i)}h3M1484 ${cy(30 + i)}h-3`).join("")} />
    </g>
    <Trace f={CL} pts={CLORANGE} c="#ff8000" />
    <Trace f={CL} pts={CLWHITE} c="#fff" />
    <Trace f={CL} pts={CLGREEN} c="#00f000" />
    <Trace f={CL} pts={CLRED} c="#f00000" />
    <Trace f={CL} pts={CLBLUE} c="#0000f8" />
    <path d="M1266 786H1484" stroke="#0000f8" strokeWidth="2" />
    <Trace f={CL} pts={CLMAG} c="#f0f" />
    <g fill="#fff8c0">
      {[80, 70, 60, 50, 40, 30].map((d) => (
        <text key={d} x="664" y={cy(d) + 4} textAnchor="end" fontSize="11">{d}</text>
      ))}
      <text x="631" y="534" fontSize="11">dBSPL</text>
    </g>
    <g fill="#c8c8c8" fontSize="11" textAnchor="middle">
      {[["50", 669], ["100", 762], ["200", 854], ["500", 977], ["1k", 1069], ["2k", 1162], ["5k", 1284], ["Hz", 1331], ["10k", 1377], ["20k", 1469]].map(([s, x]) => (
        <text key={s} x={x} y="803">{s}</text>
      ))}
    </g>
  </svg>
);

const ClioTools = styled.div`
  display: flex;
  flex: none;
  align-items: center;
  gap: 9px;
  height: 30px;
  padding: 3px 0 0 5px;
  background: linear-gradient(#fff, #f4f4f6);
  border-bottom: 1px solid #888;
`;
const ClioBtn = styled.button`
  flex: none;
  width: 22px;
  height: 22px;
  padding: 1px;
  border: 1px solid #7b9fd8;
  border-radius: 4px;
  background: #fdfdff;
  color: #000080;
  display: flex;
  align-items: center;
  justify-content: center;
  font: 11px/12px ${SANS};
  sup, sub {
    font-size: 11px;
    line-height: 14px;
  }
  sup { align-self: flex-start; }
  sub { align-self: flex-end; }
`;
const VSep = styled.i<{ $h?: number; $m?: number }>`
  flex: none;
  width: 1px;
  height: ${(p) => p.$h || 26}px;
  margin: 0 ${(p) => p.$m || 0}px;
  background: #888;
`;
const Child = styled.section`
  flex: 1;
  display: flex;
  flex-direction: column;
  padding: 0 7px;
  border: 1px solid #555;
  border-radius: 0 7px 0 0;
  background: linear-gradient(#c0cedd, #d6e3f0 31px);
`;
const AeroBtn = styled.button`
  flex: none;
  width: 32px;
  height: 18px;
  border: 1px solid #8291a8;
  border-radius: 2px;
  background: linear-gradient(#dbe4ee, #bccbdc);
  display: flex;
  align-items: center;
  justify-content: center;
`;
const ToolRow = styled.div`
  display: flex;
  flex: none;
  align-items: center;
  height: 30px;
  margin-right: -3px;
  background: #f0f0f0;
`;
const ToolBtn = styled.button<{ $on?: boolean; $dark?: boolean }>`
  flex: none;
  width: 31px;
  height: 28px;
  border: 1px solid ${(p) => (p.$on ? (p.$dark ? "#002040" : "#90c8f0") : "transparent")};
  background: ${(p) => (p.$on ? (p.$dark ? "#000c18" : "#c0dcf3") : "none")};
  display: flex;
  align-items: center;
  justify-content: center;
`;
const TextTool = styled.button<{ $w: number }>`
  flex: none;
  width: ${(p) => p.$w}px;
  height: 29px;
  border: 0;
  border-left: 1px solid #999;
  border-top: 1px solid #999;
  background: #f0f0f0;
  font: 13px/16px ${SANS};
`;
const Readout = styled.b`
  padding-left: 6px;
  font: 700 16px/20px ${SANS};
`;
const Screen = styled.div`
  flex: 1;
  margin: 4px 3px 0;
  border-top: 2px solid #222;
  background: #000;
`;
const ScreenTools = styled.div`
  display: flex;
  align-items: center;
  height: 29px;
  padding-left: 49px;
`;
const Gap = styled.i<{ $w: number }>`
  flex: none;
  width: ${(p) => p.$w}px;
`;
const NumBox = styled.span`
  width: 14px;
  height: 14px;
  border: 1px solid #fff;
  color: #fff;
  font: 700 12px/12px ${SANS};
  text-align: center;
`;
const CurveCheck = styled.span<{ $c: string; $fill?: boolean }>`
  display: flex;
  flex: none;
  width: 22px;
  input {
    appearance: none;
    width: 16px;
    height: 16px;
    border-top: 2px solid ${(p) => p.$c};
    border-right: 2px solid ${(p) => p.$c};
    background: ${(p) => (p.$fill ? "linear-gradient(#333,#333) 4px 4px/7px 7px no-repeat, #fff" : "#fff")};
    background-clip: padding-box;
    position: relative;
  }
  input:checked::after {
    content: "";
    position: absolute;
    left: 5px;
    top: 1px;
    width: 4px;
    height: 8px;
    border: solid #333;
    border-width: 0 1px 1px 0;
    transform: rotate(40deg);
  }
`;
const ClioScroll = styled.div`
  flex: none;
  width: 18px;
  padding: 6px 2px 0 1px;
  background: #f0f0f0;
  display: flex;
  flex-direction: column;
  align-items: center;
  gap: 4px;
  &::after {
    content: "";
    flex: 1;
    width: 15px;
    background: #cdcdcd;
  }
`;

const Ic = ({ children, c = "#000", w = 22, h = 22, sw = 1 }: any) => (
  <svg width={w} height={h} viewBox={`0 0 ${w} ${h}`} fill="none" stroke={c} strokeWidth={sw}>
    {children}
  </svg>
);
const cog = Array.from({ length: 12 }, (_, i) => {
  const a = (i * Math.PI) / 6;
  return `M${11 + 7.5 * Math.cos(a)} ${11 + 7.5 * Math.sin(a)}L${11 + 10.5 * Math.cos(a)} ${11 + 10.5 * Math.sin(a)}`;
}).join("");

const magnifier = (inner: string) => (
  <Ic w={18} h={18}>
    <path d="M10 10L16 16" stroke="#d8c890" strokeWidth="3" />
    <circle cx="6.5" cy="6.5" r="5" stroke="#fff" fill="#fff" />
    <circle cx="6.5" cy="6.5" r="4" stroke="#667" fill="#f4f4f4" />
    <path d={inner} stroke="#e00000" />
  </Ic>
);

const CHECKS: [string, string][] = [["#f00", "fill"], ["#fff", "fill"], ["#0f0", "fill"], ["#ff0", ""], ["#ff8000", "fill"], ["#00f", "fill"], ["#f0f", "check"], ["#7ff", ""], ["#ccc", ""]];

const ClioWindow = () => (
  <Win $x={609} $y={338} $w={930} $h={700} $bg="#fff" $edge="#999">
    <TitleBar $h={29} $pad="0 17px 0 9px">
      <svg width="15" height="15" fill="none">
        <path d="M12.5 4.5A5 5 0 1 0 12.5 10.5" stroke="#1070b8" strokeWidth="4" />
      </svg>
      CLIO
      <Spacer />
      <WinButtons />
    </TitleBar>
    <ClioTools>
      <svg width="4" height="26">
        <path d="M1 0V26" stroke="#aaa" strokeWidth="2" strokeDasharray="2 3" />
      </svg>
      <svg width="32" height="14">
        <path d="M6 2h13M6 7h13M6 12h13" stroke="#5878c8" strokeWidth="2" />
      </svg>
      <Spacer />
      <ClioBtn aria-label="Meter"><Ic w={18} c="#000080" h={18}><path d="M1 13Q9 2 17 13" /><path d="M9 12L6 8" stroke="#c00" /><path d="M1 7l3 2M9 3v3M17 7l-3 2" strokeDasharray="1 1" /><path d="M5 13l4-3 4 3" /></Ic></ClioBtn>
      <ClioBtn aria-label="Generator"><Ic w={16} c="#000080" h={18}><circle cx="8" cy="3.5" r="1.5" /><circle cx="8" cy="7.5" r="2" /><path d="M2 12h12l-6 5z" fill="#000080" /></Ic></ClioBtn>
      <ClioBtn><sup>W</sup><sub>F</sub></ClioBtn>
      <ClioBtn>Leq</ClioBtn>
      <ClioBtn aria-label="Step"><Ic w={14} c="#000080" h={14} sw={1.5}><path d="M0 12h3v-3h3v-3h3v-3h4" /></Ic></ClioBtn>
      <ClioBtn><sup>L</sup><sub>R</sub></ClioBtn>
      <ClioBtn><sup>Q</sup><sub>C</sub></ClioBtn>
      <VSep />
      <Ic w={26} h={24} c="#555"><path d="M4 17L18 3l4 4L8 21Z" fill="#f4f4f0" /><path d="M7 14l2 2M10 11l2 2M13 8l2 2M16 5l2 2" /></Ic>
      <VSep />
      <Ic w={20} h={22}><circle cx="12" cy="11" r="7" stroke="#bbb" strokeWidth="6" /><circle cx="12" cy="11" r="7" stroke="#fff" strokeWidth="4" /><circle cx="12" cy="11" r="7" stroke="#e06830" strokeWidth="5" strokeDasharray="5 6" strokeDashoffset="2" /></Ic>
    </ClioTools>
    <Row $align="stretch" $h={640} $pad="2px 0 0">
      <Child>
        <TitleBar $h={31} $bg="transparent" $pad="8px 0 0">
          <svg width="16" height="16">
            <rect x="0.5" y="0.5" width="15" height="15" fill="#fff" stroke="#000" />
            <path d="M2 8V3h6v5M5 3v5M10 1v7M15 3h-3v2h3v3h-3" stroke="#000" fill="none" />
            <path d="M1 11l4 1 3 3 3-5 4 3" stroke="#e00" fill="none" />
          </svg>
          LogChirp - Frequency Response
          <Spacer />
          <Row $gap={2}>
            <AeroBtn aria-label="Minimize"><Ic w={10} h={6} c="#556"><rect x="0.5" y="1.5" width="9" height="3" fill="#fff" /></Ic></AeroBtn>
            <AeroBtn aria-label="Restore"><Ic w={10} h={8} c="#556"><rect x="0.5" y="0.5" width="9" height="7" fill="#fff" /><path d="M3 3.5h4v1h-4z" /></Ic></AeroBtn>
            <AeroBtn aria-label="Close"><Ic w={10} h={9} c="#556" sw={3}><path d="M1 1l8 7M9 1l-8 7" /><path d="M1 1l8 7M9 1l-8 7" stroke="#fff" strokeWidth="1" /></Ic></AeroBtn>
          </Row>
        </TitleBar>
        <ToolRow>
          <ToolBtn aria-label="Go"><Ic><path d="M1 1L22 11L1 21Z" fill="#18a008" stroke="none" /></Ic></ToolBtn>
          <ToolBtn aria-label="Save"><Ic><path d="M1 1H21V21H3L1 19Z" fill="#6a86cc" stroke="#3a58a8" /><rect x="5" y="1" width="13" height="10" fill="#eee" stroke="none" /><path d="M10 10l3-8 3 8M11 7h4M6 4h4M6 7h3" /><rect x="6" y="14" width="10" height="7" fill="#d0d4dc" stroke="none" /><rect x="8" y="15" width="3" height="5" fill="#446" stroke="none" /></Ic></ToolBtn>
          <ToolBtn aria-label="Overlays"><Ic w={18}>{["#f00", "#000", "#0c0", "#00f", "#f80"].map((c, i) => (<path key={c} d={`M1 ${5 + i * 3}q2-3 4 0t4 0t4 0t4 0`} stroke={c} />))}</Ic></ToolBtn>
          <ToolBtn aria-label="Loop"><Ic c="#600040" w={18} sw={1.5}><path d="M9 11C6 6 1 6 1 11S6 16 9 11S17 6 17 11S12 16 9 11Z" /></Ic></ToolBtn>
          <ToolBtn aria-label="Speaker"><Ic w={14} h={18}><rect x="3" y="6" width="8" height="7" fill="#1030f0" /><path d="M4 1l6 4M10 1l-6 4M4 14l6 4M10 14l-6 4M2 9h10" stroke="#224" /></Ic></ToolBtn>
          <ToolBtn aria-label="Math"><Ic w={16} h={16}><path d="M1 4.5h4M10 4.5h5M12.5 1v1M12.5 7v1M0 12l2 3 1-5h4M10 12.5h5M12.5 10v5" /></Ic></ToolBtn>
          <ToolBtn aria-label="Options"><Ic c="#6a80b4"><path d={cog} strokeWidth="3" /><circle cx="11" cy="11" r="7.5" fill="#dde6f6" /><circle cx="11" cy="11" r="4" /><circle cx="11" cy="11" r="2" fill="#fff" /></Ic></ToolBtn>
          <VSep $m={3} />
          <ToolBtn aria-label="Impulse"><Ic w={18} h={16}><path d="M4.5 14V0.5M6.5 14V0.5M3 0.5h4M3 14.5H18" /></Ic></ToolBtn>
          <ToolBtn aria-label="Window"><Ic w={18} h={10}><path d="M1 8Q5 7 8 3Q10 1 12 3Q14 7 18 8" /></Ic></ToolBtn>
          <ToolBtn $on aria-label="Frequency"><Ic w={18} h={18}><path d="M1 8Q4 3 8 4L14 2Q17 2 17 7M9 4V16M2 16h15" strokeWidth="1.5" /></Ic></ToolBtn>
          <VSep $m={3} />
          <ToolBtn aria-label="Phase"><Ic w={12} h={14} sw={1.5}><ellipse cx="6" cy="7" rx="4" ry="4" /><path d="M6 0V14M4 1h4M4 13h4" /></Ic></ToolBtn>
          <ToolBtn $on aria-label="Delay"><Ic w={16} h={18}><path d="M0 6Q5 8 8 16V2Q10 2 15 13" /></Ic></ToolBtn>
          <ToolBtn aria-label="Clock"><Ic w={16} h={16}><circle cx="8" cy="8" r="6.5" stroke="#332" strokeWidth="3" fill="#fff" /><path d="M8 9L12 4" stroke="#00f" /><path d="M8 9L4 5" stroke="#e00" /></Ic></ToolBtn>
          <ToolBtn $on aria-label="Center"><Ic w={16} h={14}><path d="M0 7H16M8 0V14" /><ellipse cx="8" cy="7" rx="3" ry="3" fill="#000" /></Ic></ToolBtn>
          <ToolBtn aria-label="Step"><Ic w={16} h={14} sw={1.5}><path d="M1 13H8V1H15" /></Ic></ToolBtn>
          <ToolBtn aria-label="Decay"><Ic w={16} h={14} sw={1.5}><path d="M1 1H4L16 13" /></Ic></ToolBtn>
          <ToolBtn aria-label="Waterfall"><Ic w={16} h={14}><path d="M1.5 0V12.5H16M3.5 4V12M5.5 2V12M7.5 7V12M9.5 6V12M11.5 9V12" /></Ic></ToolBtn>
          <TextTool $w={50}>CH A</TextTool>
          <TextTool $w={65}>dBSPL</TextTool>
          <TextTool $w={86}>1/6 Octave</TextTool>
          <VSep $m={3} />
          <ToolBtn aria-label="Peaks"><Ic w={16} h={14} c="#aaa"><path d="M0 12.5H4V5L7 9L8 2L9 9L12 5V12.5H16M1 2v5l2-2zM15 2v5l-2-2z" /></Ic></ToolBtn>
          <ToolBtn aria-label="Up"><Ic w={10} h={6}><path d="M0 6L5 0L10 6Z" fill="#000" stroke="none" /></Ic></ToolBtn>
          <ToolBtn aria-label="Down"><Ic w={10} h={6}><path d="M0 0L5 6L10 0Z" fill="#000" stroke="none" /></Ic></ToolBtn>
          <VSep />
          <Readout>0.000</Readout>
        </ToolRow>
        <Screen>
          <ScreenTools>
            {["M0 8L5 3L10 8Z", "M0 4L5 9L10 4Z", "M0 5L5 0L10 5ZM0 7L5 12L10 7Z", "M0 0L5 5L10 0ZM0 12L5 7L10 12Z"].map((d) => (
              <ToolBtn key={d} aria-label="Scale"><Ic w={10} h={12}><path d={d} fill="#fff" stroke="none" /></Ic></ToolBtn>
            ))}
            <Gap $w={14} />
            <ToolBtn $on $dark aria-label="Zoom in">{magnifier("M4 6.5h5M6.5 4v5")}</ToolBtn>
            <ToolBtn $on $dark aria-label="Zoom out">{magnifier("M4 6.5h5")}</ToolBtn>
            <Gap $w={15} />
            <ToolBtn><NumBox>A</NumBox></ToolBtn>
            <ToolBtn><NumBox>B</NumBox></ToolBtn>
            <Gap $w={14} />
            <CurveCheck $c="#ffffc0"><input type="checkbox" aria-label="Reference" defaultChecked /></CurveCheck>
            <Gap $w={38} />
            {CHECKS.map(([c, s], i) => (
              <React.Fragment key={c}>
                <ToolBtn $on={i === 1 || i === 3} $dark><NumBox>{i + 1}</NumBox></ToolBtn>
                <CurveCheck $c={c} $fill={s === "fill"}><input type="checkbox" aria-label={`Curve ${i + 1}`} defaultChecked={s === "check"} /></CurveCheck>
              </React.Fragment>
            ))}
          </ScreenTools>
          <ClioChart />
        </Screen>
      </Child>
      <ClioScroll>
        <Ic w={10} h={8} c="#505050" sw={2}><path d="M1 7L5 2L9 7" /></Ic>
      </ClioScroll>
    </Row>
  </Win>
);

/* ---------- Graphs window ---------- */

const GF: Frame = { ox: 570, oy: 810, sx: 3, sy: 2.525 };

const GraphsChart = () => (
  <svg width="968" height="519" viewBox="579 906 968 519">
    <LspGrid x={676.5} r={1449.5} t={958.5} b={1372.5} x1k={1063} dec={291.1} ys={[960.5, 1042.5, 1123.5, 1205.5, 1287.5]} step={16.35} dashW={4} />
    <path d={Array.from({ length: 36 }, (_, i) => `M1449 ${Math.round(1162 + (i - 17) * 11.4) + 0.5}h${(i - 17) % 5 === 0 ? -5 : -3}`).join("")} stroke="#808080" />
    <Trace f={GF} c="#2ca880" w={1} dash="3 3" pts={[343, 600, 380, 620, 430, 655, 500, 700, 560, 735, 610, 760, 700, 795, 800, 825, 850, 852, 920, 880, 1000, 912, 1080, 938, 1200, 968, 1260, 1000, 1320, 1040, 1400, 1085, 1440, 1110, 1480, 1145, 1500, 1165, 1550, 1205, 1580, 1232, 1620, 1245, 1660, 1290, 1700, 1350, 1737, 1400]} />
    <Trace f={GF} c="#2ca880" w={1} dash="4 3" sharp pts={[1739, 1400, 1742, 880, 1748, 380]} />
    <Trace f={GF} c="#2ca880" w={1} dash="3 3" pts={[1748, 380, 1820, 470, 1900, 535, 1970, 590, 2050, 660, 2120, 705, 2200, 745, 2260, 770, 2290, 785, 2330, 790, 2400, 777, 2480, 782, 2530, 780, 2560, 760, 2590, 758, 2614, 773]} />
    <Trace f={GF} c="#eaa898" pts={[343, 710, 380, 685, 440, 662, 520, 652, 565, 636, 690, 626, 760, 615, 830, 598, 900, 590, 970, 588, 1020, 580, 1080, 575, 1130, 565, 1190, 538, 1260, 512, 1320, 504, 1400, 497, 1480, 497, 1510, 520, 1565, 555, 1590, 590, 1620, 608, 1660, 615, 1710, 650, 1745, 695, 1765, 750, 1790, 785, 1870, 855, 1910, 890, 1970, 891, 2010, 915, 2070, 1000, 2110, 1030, 2150, 1115, 2165, 1120, 2205, 1086, 2220, 1093, 2240, 1140, 2265, 1205, 2310, 1240, 2340, 1290, 2357, 1342]} />
    <Trace f={GF} c="#808080" w={2} pts={[1340, 503, 1370, 517, 1440, 520, 1490, 530, 1520, 560, 1545, 590, 1570, 600, 1600, 665, 1630, 750, 1660, 825, 1675, 836, 1690, 820, 1720, 740, 1745, 665, 1770, 620, 1810, 583, 1870, 573, 1930, 545, 2000, 530, 2090, 521, 2170, 521, 2210, 527, 2265, 520, 2310, 540]} />
    <Trace f={GF} c="#355a48" pts={[1253, 1419, 1285, 1340, 1340, 1210, 1395, 1085, 1440, 995, 1465, 945, 1500, 890, 1530, 840, 1580, 755, 1620, 700, 1670, 630, 1710, 585, 1745, 563, 1810, 545, 1860, 550, 1910, 540, 1970, 525, 2040, 512, 2160, 512, 2210, 520, 2270, 518, 2310, 538, 2350, 549, 2410, 541, 2480, 538, 2540, 550]} />
    <Trace f={GF} c="#85bd00" pts={[343, 710, 410, 665, 440, 652, 520, 635, 565, 617, 600, 611, 700, 608, 790, 600, 820, 588, 900, 588, 950, 594, 1080, 601, 1150, 620, 1210, 642, 1290, 646, 1340, 660, 1390, 695, 1440, 745, 1490, 795, 1520, 845, 1550, 900, 1590, 963, 1625, 965, 1650, 985, 1680, 1028, 1715, 1030, 1745, 1070, 1800, 1165, 1845, 1200, 1870, 1230, 1915, 1267, 1940, 1266, 1970, 1258, 2000, 1270, 2040, 1320, 2070, 1370, 2085, 1382]} />
    <Trace f={GF} c="#984a80" pts={[343, 587, 410, 543, 440, 531, 520, 518, 565, 503, 600, 499, 690, 496, 790, 488, 820, 479, 860, 483, 900, 477, 950, 485, 1040, 491, 1120, 503, 1200, 504, 1250, 496, 1300, 495, 1340, 503, 1380, 517, 1440, 511, 1480, 503, 1500, 512, 1535, 530, 1565, 527, 1600, 543, 1620, 541, 1650, 523, 1690, 508, 1735, 500, 1790, 509, 1860, 524, 1930, 518, 2010, 502, 2090, 504, 2140, 510, 2260, 515, 2290, 525, 2350, 549, 2380, 549, 2420, 541, 2480, 540, 2540, 550, 2570, 530, 2600, 511, 2614, 513]} />
    <rect x="1498.5" y="911.5" width="28" height="25" rx="4" fill="#fff" stroke="#b0b0b0" />
    <T x={647} y={939} s={14}>dB</T>
    <T x={1459} y={939} s={14}>deg</T>
    {[["80.00", 968], ["70.00", 1049], ["60.00", 1131], ["50.00", 1212], ["40.00", 1294]].map(([s, y]) => (
      <T key={s} x={666} y={y} a="end" s={14}>{s}</T>
    ))}
    {["150.0", "100.0", "50.0", "0.0", "-50.0", "-100.0", "-150.0"].map((s, i) => (
      <T key={s} x={1459} y={999 + i * 57} s={14}>{s}</T>
    ))}
    <T x={666} y={1388} s={14}>50 Hz</T>
    {[["100", 771], ["500", 975], ["1000", 1063], ["5000", 1266]].map(([s, x]) => (
      <T key={s} x={x} y={1388} a="middle" s={14}>{s}</T>
    ))}
    <T x={1491} y={1375} s={14}>Hz</T>
    <T x={589} y={1415} s={14}>LspCAD 6</T>
    <Legend x={1265} y={1342} w={202} h={100} top={1358} pitch={16} lineX={1284} textX={1343} font={SANS} size={12}
      items={[["Total SPL, mag", "#984a80", 2], ["Reference", "#808080", 1], ["Bliesma, mag", "#355a48", 2], ["MidW Upper, mag", "#eaa898", 2], ["MidW Lower, mag", "#85bd00", 2]]} />
  </svg>
);

const NoneTab = styled.div`
  flex: none;
  height: 19px;
  padding: 4px 24px;
  line-height: 14px;
`;

const GraphsWindow = () => (
  <Win $x={575} $y={815} $w={985} $h={640}>
    <TitleBar $h={28} $pad="0 17px 0 28px">
      Graphs
      <Spacer />
      <WinButtons />
    </TitleBar>
    <MenuBar $gap={15} $pad="0 0 0 45px" $h={23} $color="#777" $bg="#fff">
      {["Copy", "Export", "Main form", "Schema"].map((m) => (
        <button key={m}>{m}</button>
      ))}
    </MenuBar>
    <TabStrip>
      <Tab $active $w={58}>SPL mag</Tab>
      {["SPL phase", "Impedance", "Voltage", "Current", "Xfer func", "Group delay", "Time domain", "Off axis, overlay", "Polar plot", "Polar map"].map((t) => (
        <Tab key={t}>{t}</Tab>
      ))}
    </TabStrip>
    <NoneTab>None</NoneTab>
    <Paper $m="0 12px 0 3px">
      <GraphsChart />
    </Paper>
    <Row $h={30} />
  </Win>
);

/* ---------- VituixCAD ---------- */

const VHead = styled.div`
  display: flex;
  flex: none;
  align-items: center;
  gap: 6px;
  width: 532px;
  height: 26px;
`;
const VBox = styled.input<{ $w: number }>`
  width: ${(p) => p.$w}px;
  height: 20px;
  border: 1px solid #7a7a7a;
  background: #fff;
  text-align: center;
`;
const VBtn = styled.button<{ $on?: boolean; $dim?: boolean; $c?: string; $bg?: string }>`
  display: flex;
  align-items: center;
  justify-content: center;
  min-width: 20px;
  min-height: 20px;
  border: 1px solid ${(p) => (p.$on ? "#0050a0" : p.$dim ? "#bfbfbf" : "#9a9a9a")};
  background: ${(p) => p.$bg || (p.$on ? "#cce4f7" : p.$dim ? "#cccccc" : "#e1e1e1")};
  color: ${(p) => p.$c || "#222"};
`;
const VBody = styled.div`
  flex: 1;
  display: flex;
  min-height: 0;
`;
const VPanel = styled.div`
  flex: none;
  width: 541px;
  background: #f0f0f0;
  display: flex;
  flex-direction: column;
`;
const VTabs = styled.div`
  display: flex;
  flex: none;
  align-items: flex-end;
  height: 21px;
  padding-left: 1px;
  margin-right: 10px;
  border-bottom: 1px solid #d9d9d9;
`;
const VTab = styled.button<{ $on?: boolean }>`
  height: ${(p) => (p.$on ? 21 : 19)}px;
  padding: 0 4px;
  border: 1px solid #d9d9d9;
  border-bottom: 0;
  background: ${(p) => (p.$on ? "#fff" : "#f0f0f0")};
`;
const VTools = styled.div`
  display: grid;
  flex: none;
  grid-template-columns: repeat(6, 37px) 48px 48px 37px 37px 22px 30px 30px;
  grid-auto-rows: 25px;
  gap: 3px;
  align-items: center;
  padding: 9px 0 11px 12px;
`;
const VTool = styled(VBtn)`
  height: 25px;
  border-color: #707070;
`;
const VCanvasRow = styled.div`
  display: flex;
  flex: none;
  height: 1060px;
  padding-left: 9px;
`;
const VCanvas = styled.div`
  flex: none;
  width: 505px;
  background: #fff;
`;
const VScroll = styled.div`
  width: 16px;
  display: flex;
  flex-direction: column;
  align-items: center;
  justify-content: space-between;
  padding: 4px 0;
  div {
    flex: 1;
    width: 15px;
    margin: 3px 0 4px;
    background: linear-gradient(#cdcdcd, #cdcdcd) 0 0 / 100% 780px no-repeat;
  }
`;
const VFoot = styled.div`
  display: flex;
  flex: none;
  align-items: flex-start;
  padding: 37px 0 0 9px;
  gap: 9px;
`;
const PartsTable = styled.div`
  flex: none;
  width: 347px;
  height: 136px;
  border: 1px solid #000;
  background: linear-gradient(#fff 22px, #ababab 22px);
`;
const Radio = styled.label`
  display: flex;
  align-items: center;
  gap: 6px;
  height: 22px;
  color: #a0a0a0;
  input {
    appearance: none;
    flex: none;
    width: 13px;
    height: 13px;
    border: 1px solid #c4c4c4;
    border-radius: 50%;
    background: #fff;
  }
  input:checked {
    background: radial-gradient(#c0c0c0 3px, #fff 4px);
  }
`;
const ScenGrid = styled.div`
  display: grid;
  grid-template-columns: 28px 29px;
  grid-auto-rows: 21px;
  gap: 2px;
`;

const Coil = ({ x, y, len = 42, v }: { x: number; y: number; len?: number; v?: boolean }) => {
  const step = (len - 14) / 3;
  return (
    <g transform={v ? `translate(${x} ${y}) rotate(90)` : `translate(${x} ${y})`} fill="none" stroke="#000" strokeWidth="1.5">
      <path d={`M0 0Q1 -5 6 -5Q10 -5 10 0M${len} 0Q${len - 1} -5 ${len - 6} -5Q${len - 10} -5 ${len - 10} 0`} />
      {[0, 1, 2, 3].map((i) => (
        <ellipse key={i} cx={7 + i * step} cy="0" rx="3.5" ry="5" />
      ))}
    </g>
  );
};

const VGnd = ({ x, y }: { x: number; y: number }) => <path d={`M${x - 8} ${y}h16l-8 8z`} fill="#fff" stroke="#000" strokeWidth="1.5" />;
const VSpk = ({ x, y, lines }: { x: number; y: number; lines: string[] }) => (
  <g>
    <path d={`M${x} ${y}V${y + 17}M${x} ${y + 44}V${y + 69}`} stroke="#000" />
    <rect x={x - 2} y={y + 17} width="10" height="26" fill="#fff" stroke="#000" strokeWidth="1.5" />
    <path d={`M${x + 8} ${y + 19}L${x + 20} ${y + 8}V${y + 52}L${x + 8} ${y + 41}Z`} fill="#fff" stroke="#000" strokeWidth="1.5" />
    <circle cx={x} cy={y} r="2" />
    <circle cx={x} cy={y + 60} r="2" />
    <VGnd x={x} y={y + 70} />
    <T x={x + 2} y={y + 12}>+</T>
    <T x={x + 2} y={y + 52}>-</T>
    {lines.map((l, i) => (
      <T key={l} x={x + 25} y={y + 11 + i * 12}>{l}</T>
    ))}
  </g>
);

const VitCanvas = () => (
  <svg width="505" height="1060" viewBox="1251 151 505 1060">
    <defs>
      <pattern id="dots" x="1251" y="151" width="10" height="10" patternUnits="userSpaceOnUse">
        <rect width="1" height="1" fill="#666" />
      </pattern>
    </defs>
    <rect x="1256" y="156" width="500" height="1050" fill="url(#dots)" />
    <g fill="none" stroke="#000">
      <path d="M1271.5 400V191.5H1300M1342 191.5H1377M1385 191.5H1437M1445 191.5H1510M1552 191.5H1651.5M1411.5 191.5V232M1411.5 272V290M1501.5 191.5V251.5H1510M1552 251.5H1561.5V191.5M1501.5 221.5H1527M1535 221.5H1561.5M1591.5 191.5V202M1591.5 242V277M1591.5 285V321M1591.5 361V381M1300 411.5H1661.5M1300 601.5H1661.5" />
      <path d="M1377 181V201M1385 181V201M1437 181V201M1445 181V201M1528 211V231M1536 211V231M1581 277H1602M1581 285H1602" strokeWidth="2" />
    </g>
    <g fill="#fff" stroke="#000" strokeWidth="2">
      <rect x="1300" y="186" width="42" height="11" />
      <rect x="1510" y="186" width="42" height="11" />
      <rect x="1586" y="321" width="11" height="40" />
    </g>
    <Coil x={1510} y={251.5} />
    <Coil x={1411.5} y={231} v />
    <Coil x={1591.5} y={201} v />
    {[[1291.5, 191.5], [1351.5, 191.5], [1411.5, 191.5], [1471.5, 191.5], [1501.5, 191.5], [1561.5, 191.5], [1591.5, 191.5], [1411.5, 221.5], [1411.5, 281.5], [1501.5, 221.5], [1561.5, 221.5], [1501.5, 251.5], [1561.5, 251.5], [1591.5, 251.5], [1591.5, 311.5], [1591.5, 371.5]].map(([x, y]) => (
      <circle key={`${x}-${y}`} cx={x} cy={y} r="2" />
    ))}
    <VGnd x={1411.5} y={291} />
    <VGnd x={1591.5} y={381} />
    {[["3.3Ω", 1321, 181], ["11µF", 1381, 179], ["30µF", 1441, 179], ["13Ω", 1531, 181], ["3µF", 1531, 209], ["360µH", 1531, 241], ["211mΩ", 1519, 268]].map(([s, x, y]) => (
      <T key={s} x={x} y={y} a="middle">{s}</T>
    ))}
    {[["110µH", 1400, 252], ["212mΩ", 1427, 263], ["560µH", 1580, 221], ["200mΩ", 1607, 233], ["100µF", 1578, 282], ["6.8Ω", 1580, 341]].map(([s, x, y]) => (
      <T key={s} x={x} y={y} a="middle" rot>{s}</T>
    ))}
    <VSpk x={1651.5} y={191.5} lines={["D1 BliesmaWG", "X 0m", "Y 0m", "Z -31mm"]} />
    <VSpk x={1661.5} y={411.5} lines={["D2 MidW upp", "X 0m", "Y -180mm", "Z -15mm"]} />
    <VSpk x={1661.5} y={601.5} lines={["D3 MidW low", "X 0m", "Y -360mm", "Z -4mm"]} />
  </svg>
);

const SF: Frame = { ox: 0, oy: 0, sx: 0.63276, sy: 0.63276 };
const sxp = (f: number) => Math.round(2169 + 209.3 * Math.log10(f / 1000)) + 0.5;
const syp = (db: number) => Math.round(554.5 + (80 - db) * 8.93) + 0.5;
const SPL_FREQS = [20, 30, 40, ...MAJOR];

const SplChart = () => (
  <svg width="694" height="420" viewBox="1783 534 694 420">
    <g fill="none" shapeRendering="crispEdges">
      <path d={Array.from({ length: 41 }, (_, i) => `M1815 ${syp(40 + i)}H2451`).join("")} stroke="#e0e0e0" />
      <path d={SPL_FREQS.map((f) => `M${sxp(f)} 554V912`).join("") + "M2451.5 554V912"} stroke="#b8b8b8" />
      <path d={[80, 75, 70, 65, 60, 55, 50, 45, 40].map((d) => `M1815 ${syp(d)}H2451`).join("")} stroke="#a8a8a8" />
    </g>
    <Trace f={SF} c="#e0b050" w={1} pts={[1149, 513, 1180, 515, 1200, 518, 1220, 518, 1235, 508, 1250, 490, 1265, 462, 1280, 440, 1300, 412, 1320, 395, 1335, 380, 1350, 368, 1365, 360, 1375, 363, 1387, 351]} />
    <Trace f={SF} c="#e0b050" w={1} pts={[1492, 351, 1499, 382, 1510, 362, 1520, 370, 1527, 366, 1535, 357, 1540, 362, 1551, 367]} />
    <Trace f={SF} c="#20c020" w={1} pts={[1149, 491, 1160, 465, 1180, 444, 1200, 425, 1220, 415, 1250, 417, 1280, 410, 1300, 409, 1320, 402, 1340, 390, 1365, 389, 1375, 392, 1385, 410, 1400, 417, 1410, 440, 1420, 465, 1435, 485, 1450, 492, 1460, 510, 1470, 535, 1480, 545, 1497, 577]} />
    <Trace f={SF} c="#2020f0" w={1} pts={[1149, 463, 1165, 443, 1180, 428, 1200, 414, 1220, 410, 1240, 412, 1270, 412, 1300, 410, 1320, 416, 1340, 430, 1355, 432, 1365, 445, 1375, 468, 1385, 510, 1400, 518, 1410, 535, 1420, 560, 1430, 577]} />
    <Trace f={SF} c="#505050" w={2} pts={[1149, 442, 1160, 425, 1175, 410, 1190, 396, 1200, 389, 1220, 389, 1240, 384, 1258, 385, 1280, 381, 1300, 383, 1330, 386, 1345, 385, 1360, 388, 1370, 387, 1385, 394, 1395, 395, 1410, 389, 1425, 396, 1440, 391, 1465, 390, 1490, 390, 1505, 398, 1530, 396, 1540, 388, 1551, 391]} />
    <Trace f={SF} c="#f02020" w={1} pts={[1354, 577, 1365, 535, 1375, 495, 1385, 460, 1395, 430, 1405, 410, 1420, 399, 1440, 395, 1460, 391, 1490, 390, 1505, 398, 1530, 396, 1540, 388, 1551, 391]} />
    <T x={2133} y={549} a="middle">SPL</T>
    {[80, 75, 70, 65, 60, 55, 50, 45, 40].map((d) => (
      <T key={d} x={1812} y={syp(d) + 4} a="end">{d}</T>
    ))}
    <T x={1812} y={569} a="end">dB</T>
    {["180", "135", "90", "45", "0", "-45", "-90", "-135", "-180"].map((s, i) => (
      <T key={s} x={2475} y={syp(80 - i * 5) + 4} a="end">{s}</T>
    ))}
    <T x={2475} y={569} a="end">deg</T>
    {[["20Hz", 1815], ["50", 1898], ["100", 1960], ["200", 2023], ["500", 2106], ["1k", 2169], ["2k", 2232], ["5k", 2315], ["10k", 2378], ["20k", 2441]].map(([s, x]) => (
      <T key={s} x={x} y={924} a="middle">{s}</T>
    ))}
  </svg>
);

const VSide = styled.div`
  flex: 1;
  min-width: 0;
  background: #fff;
  padding-top: 504px;
`;
const VGroup = styled(Group)`
  legend {
    padding: 0 3px;
  }
`;

const VituixWindow = () => (
  <Win $x={1241} $y={-1} $bg="#f0f0f0" $edge="#fff">
    <TitleBar $h={30} $pad="0 10px 0 7px">
      <svg width="15" height="13">
        <path d="M3 0H12L15 4L7.5 13L0 4Z" fill="#d01010" />
        <path d="M4 3h7l-3.5 7z" fill="#f8c800" />
        <path d="M5 4h5l-2.5 5z" fill="#a00" />
      </svg>
      VituixCAD: D:\OneDrive\2 - DIY projects\Alo front speaker\Ready Box Meas 2\OLA_Xover_ver1.4.vxp
      <Spacer />
      <WinButtons />
    </TitleBar>
    <VBody>
      <VPanel>
        <VHead>
          <MenuBar $gap={19} $pad="0 14px" $h={24}>
            {["File", "View", "Tools", "Options", "Help"].map((m) => (
              <button key={m}>{m}</button>
            ))}
          </MenuBar>
          <Spacer />
          <Label htmlFor="angle">Reference angle</Label>
          <VBox id="angle" $w={34} defaultValue="0" />
          <span>deg hor</span>
          <Row $gap={2}>
            <VBtn aria-label="Step"><Ic w={14} h={14}><path d="M1 6L7 0L13 6ZM1 8L7 14L13 8Z" fill="#444" stroke="none" /></Ic></VBtn>
            <VBtn aria-label="Reset"><Ic w={14} h={14}><path d="M1 0H13V2L8 7L13 12V14H1V12L6 7L1 2Z" fill="#444" stroke="none" /></Ic></VBtn>
          </Row>
        </VHead>
        <VTabs>
          <VTab>Drivers</VTab>
          <VTab $on>Crossover</VTab>
          <VTab>Room</VTab>
        </VTabs>
        <VTools>
          <VTool aria-label="Low pass"><Ic w={36} h={24} c="#f00" sw={2}><path d="M3 9H18L31 21" /></Ic></VTool>
          <VTool aria-label="High pass"><Ic w={36} h={24} c="#0020ff" sw={2}><path d="M5 21L18 9H34" /></Ic></VTool>
          <VTool aria-label="Band"><Ic w={36} h={24} c="#f02020" sw={2}><path d="M3 8C16 2 16 19 26 19Q31 19 34 17" /></Ic></VTool>
          <VTool aria-label="Shelf"><Ic w={36} h={24} sw={2}><path d="M3 13H20" stroke="#f00" /><path d="M3 5H14L22 13H34" /></Ic></VTool>
          <VTool aria-label="Buffer"><Ic w={36} h={24} sw={1.5}><path d="M13 4L27 12.5L13 21Z" /></Ic></VTool>
          <VTool aria-label="Opamp"><Ic w={36} h={24} sw={1.5}><path d="M13 4L28 12.5L13 21ZM9 8.5H13M9 16.5H13M28 12.5H32M15 9h4M17 7v4M15 16h3" /></Ic></VTool>
          <VTool aria-label="Capacitor"><Ic w={46} h={24} sw={2}><path d="M19 2V22M28 2V22" /><path d="M3 12.5H19M28 12.5H44" strokeWidth="1" /></Ic></VTool>
          <VTool aria-label="Resistor"><Ic w={46} h={24} sw={2}><rect x="5" y="8" width="36" height="9" /></Ic></VTool>
          <VTool>LIB</VTool>
          <VTool aria-label="Wire"><Ic w={36} h={24}><path d="M7 12.5H28" /><circle cx="7" cy="12.5" r="1.5" fill="#000" /><circle cx="28" cy="12.5" r="1.5" fill="#000" /></Ic></VTool>
          <VTool>T</VTool>
          <VBox $w={30} aria-label="Column" defaultValue="0" />
          <VBox $w={30} aria-label="Row" defaultValue="13" />
          <VTool aria-label="Low shelf"><Ic w={36} h={24} c="#f00" sw={2}><path d="M3 5H14L22 13H34" /></Ic></VTool>
          <VTool aria-label="High shelf"><Ic w={36} h={24} c="#0020ff" sw={2}><path d="M3 13H14L22 5H34" /></Ic></VTool>
          <VTool aria-label="Peak"><Ic w={36} h={24} c="#108020" sw={2}><path d="M3 17C13 14 13 6 18.5 6S24 14 34 17" /></Ic></VTool>
          <VTool>BiQ</VTool>
          <VTool>G(f)</VTool>
          <span />
          <VTool aria-label="Inductor"><svg width="46" height="24"><Coil x={3} y={12} len={40} /></svg></VTool>
          <VTool aria-label="Transformer"><Ic w={46} h={24} sw={1.5}><circle cx="19" cy="12.5" r="7.5" /><circle cx="28" cy="12.5" r="7.5" /><path d="M4 12.5H11M36 12.5H44" strokeWidth="1" /></Ic></VTool>
          <VTool aria-label="Driver"><Ic w={36} h={24} sw={2}><rect x="11" y="6" width="6" height="12" /><path d="M17 9L24 3V21L17 15" /></Ic></VTool>
          <VTool aria-label="Ground"><Ic w={36} h={24} sw={1.5}><path d="M18 3V9M8 9H28L18 18Z" /></Ic></VTool>
          <VTool $bg="#add8e6">X</VTool>
          <VBtn>1:1</VBtn>
          <VBtn>Fit</VBtn>
        </VTools>
        <VCanvasRow>
          <VCanvas>
            <VitCanvas />
          </VCanvas>
          <VScroll>
            <Ic w={9} h={7} c="#505050" sw={2}><path d="M1 6L4.5 2L8 6" /></Ic>
            <div />
            <Ic w={9} h={7} c="#505050" sw={2}><path d="M1 1L4.5 5L8 1" /></Ic>
          </VScroll>
        </VCanvasRow>
        <Row $h={17} $pad="0 33px 0 0" $justify="flex-end">
          <Ic w={6} h={9} c="#505050" sw={2}><path d="M1 1L5 4.5L1 8" /></Ic>
        </Row>
        <VFoot>
          <PartsTable />
          <Row $gap={6} $align="flex-start">
            <Col $gap={6}>
              <Row $gap={7} $align="flex-start">
                <Col $gap={5}>
                  <VBtn aria-label="Move up"><Ic w={12} h={10}><path d="M0 10L6 0L12 10Z" fill="#444" stroke="none" /></Ic></VBtn>
                  <VBtn aria-label="Move down"><Ic w={12} h={10}><path d="M0 0L6 10L12 0Z" fill="#444" stroke="none" /></Ic></VBtn>
                </Col>
                <Col $pad="6px 0 0">
                  <VGroup $w={58} $h={101} $line="#dcdcdc" $pad="8px 7px" $left={5}>
                    <legend><Label $dim>Snap</Label></legend>
                    {["5 %", "E12", "E24", "E48"].map((s) => (
                      <Radio key={s}>
                        <input type="radio" name="snap" disabled defaultChecked={s === "E24"} />
                        {s}
                      </Radio>
                    ))}
                  </VGroup>
                </Col>
              </Row>
              <Row $gap={8} $justify="space-between">
                <Label htmlFor="part">Part #</Label>
                <VBox id="part" $w={49} defaultValue="" />
              </Row>
            </Col>
            <Col $pad="6px 0 0">
              <VGroup $w={66} $h={128} $line="#dcdcdc" $pad="8px 3px" $left={5}>
                <legend>Scenario</legend>
                <ScenGrid>
                  {[1, 2, 3, 4, 5].map((n) => (
                    <React.Fragment key={n}>
                      <VBtn $c="#f00000">{`S${n}`}</VBtn>
                      <VBtn $on={n === 1} $dim={n > 1} $c={n === 1 ? "#0000f0" : "#a0a0a0"}>{`R${n}`}</VBtn>
                    </React.Fragment>
                  ))}
                </ScenGrid>
              </VGroup>
            </Col>
          </Row>
        </VFoot>
      </VPanel>
      <VSide>
        <SplChart />
      </VSide>
    </VBody>
  </Win>
);

export default function App() {
  return (
    <>
      <Global />
      <Desktop>
        <PhaseWindow />
        <VituixWindow />
        <ClioWindow />
        <GraphsWindow />
        <LspMain />
        <SchemaWindow />
        <EmulatorDialog />
        <TransferWindow />
      </Desktop>
    </>
  );
}
